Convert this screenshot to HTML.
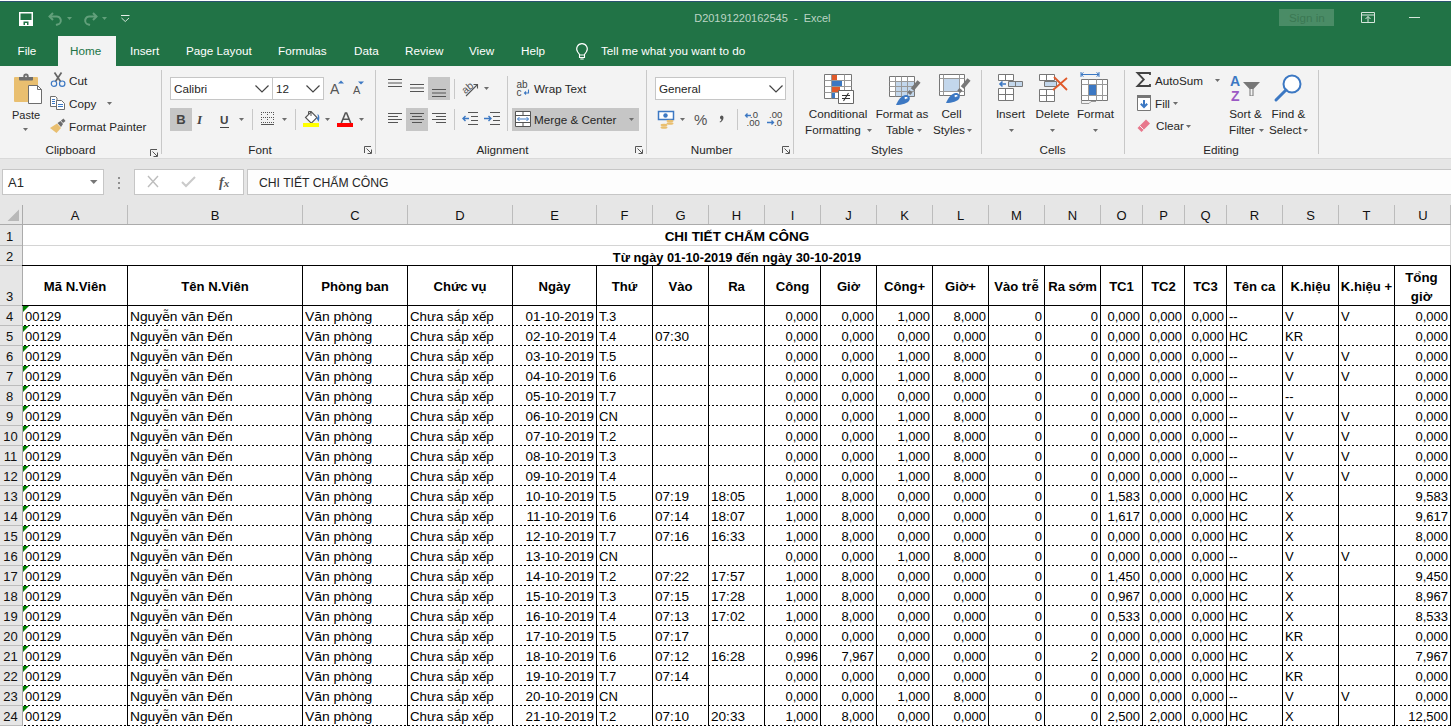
<!DOCTYPE html><html><head><meta charset="utf-8"><style>
*{margin:0;padding:0;box-sizing:border-box}
html,body{width:1451px;height:726px;overflow:hidden;background:#ffffff;font-family:"Liberation Sans", sans-serif;position:relative}
.a{position:absolute;white-space:nowrap}
svg.a{overflow:visible}
</style></head><body><div class="a" style="left:0px;top:0px;width:1451px;height:1px;background:#ffffff;"></div><div class="a" style="left:0px;top:1px;width:1451px;height:1px;background:#2a5270;"></div><div class="a" style="left:0px;top:2px;width:1451px;height:64px;background:#217346;"></div><svg class="a" style="left:19px;top:12px" width="14" height="14" viewBox="0 0 14 14"><path d="M0.75 0.75H13.25V13.25H0.75Z" fill="none" stroke="#fff" stroke-width="1.5"/><path d="M1 8H13V13H1Z" fill="#fff"/><path d="M4.5 9.5H9.5V13H4.5Z" fill="#217346"/><path d="M6 11H8V13H6Z" fill="#fff"/><path d="M3 1H11V7H3Z" fill="none"/></svg><svg class="a" style="left:48px;top:12px" width="15" height="14" viewBox="0 0 15 14"><path d="M5 1L1.5 4.5L5 8" fill="none" stroke="#62a07b" stroke-width="2"/><path d="M1.5 4.5H8A4 4 0 0 1 9.5 12.5L8 13" fill="none" stroke="#62a07b" stroke-width="2"/></svg><svg class="a" style="left:67px;top:17px" width="6" height="4" viewBox="0 0 6 4"><path d="M0 0H5L2.5 3Z" fill="#62a07b"/></svg><svg class="a" style="left:83px;top:12px" width="15" height="14" viewBox="0 0 15 14"><path d="M10 1L13.5 4.5L10 8" fill="none" stroke="#62a07b" stroke-width="2"/><path d="M13.5 4.5H7A4 4 0 0 0 5.5 12.5L7 13" fill="none" stroke="#62a07b" stroke-width="2"/></svg><svg class="a" style="left:102px;top:17px" width="6" height="4" viewBox="0 0 6 4"><path d="M0 0H5L2.5 3Z" fill="#62a07b"/></svg><svg class="a" style="left:121px;top:14px" width="9" height="9" viewBox="0 0 9 9"><path d="M0 1.5H8.5" stroke="#e3eee7" stroke-width="1"/><path d="M0.5 4L4.25 7.5L8 4" fill="none" stroke="#e3eee7" stroke-width="0.9"/></svg><div class="a" style="left:694.2px;top:10.7px;font-size:11px;line-height:15px;color:#bcd5c5;font-weight:normal;white-space:pre">D20191220162545  -  Excel</div><div class="a" style="left:1279px;top:9px;width:55px;height:17px;background:#4a8c66;"></div><div class="a" style="left:1289px;top:9.5px;font-size:11.7px;line-height:16px;color:#3b7853;font-weight:normal;">Sign in</div><svg class="a" style="left:1361px;top:12px" width="14" height="11" viewBox="0 0 14 11"><path d="M0.5 0.5H13.5V10.5H0.5Z M0.5 3H13.5 M7 10.5V4.5 M4.5 7L7 4.5L9.5 7" fill="none" stroke="#d6e6dc" stroke-width="1"/></svg><div class="a" style="left:1409px;top:17px;width:11px;height:1px;background:#d6e6dc;"></div><div class="a" style="left:58px;top:36px;width:58px;height:30px;background:#f3f3f3;"></div><div class="a" style="left:70px;top:43.0px;font-size:11.7px;line-height:16px;color:#217346;font-weight:normal;">Home</div><div class="a" style="left:17.5px;top:43.0px;font-size:11.7px;line-height:16px;color:#ffffff;font-weight:normal;">File</div><div class="a" style="left:130px;top:43.0px;font-size:11.7px;line-height:16px;color:#ffffff;font-weight:normal;">Insert</div><div class="a" style="left:186px;top:43.0px;font-size:11.7px;line-height:16px;color:#ffffff;font-weight:normal;">Page Layout</div><div class="a" style="left:278px;top:43.0px;font-size:11.7px;line-height:16px;color:#ffffff;font-weight:normal;">Formulas</div><div class="a" style="left:354px;top:43.0px;font-size:11.7px;line-height:16px;color:#ffffff;font-weight:normal;">Data</div><div class="a" style="left:405px;top:43.0px;font-size:11.7px;line-height:16px;color:#ffffff;font-weight:normal;">Review</div><div class="a" style="left:469px;top:43.0px;font-size:11.7px;line-height:16px;color:#ffffff;font-weight:normal;">View</div><div class="a" style="left:521px;top:43.0px;font-size:11.7px;line-height:16px;color:#ffffff;font-weight:normal;">Help</div><svg class="a" style="left:576px;top:43px" width="12" height="17" viewBox="0 0 12 17"><path d="M6 0.6A5.3 5.3 0 0 0 1.7 9L3.5 11.5V14.5H8.5V11.5L10.3 9A5.3 5.3 0 0 0 6 0.6Z" fill="none" stroke="#fff" stroke-width="1.1"/><path d="M3.5 12H8.5M4.3 16H7.7" stroke="#fff" stroke-width="1.1"/></svg><div class="a" style="left:601px;top:43.0px;font-size:11.7px;line-height:16px;color:#ffffff;font-weight:normal;">Tell me what you want to do</div><div class="a" style="left:0px;top:66px;width:1451px;height:92px;background:#f3f3f3;"></div><div class="a" style="left:0px;top:158px;width:1451px;height:1px;background:#d9d9d9;"></div><div class="a" style="left:0px;top:159px;width:1451px;height:46px;background:#e6e6e6;"></div><div class="a" style="left:161px;top:70px;width:1px;height:84px;background:#c8c8c8;"></div><div class="a" style="left:375px;top:70px;width:1px;height:84px;background:#c8c8c8;"></div><div class="a" style="left:646px;top:70px;width:1px;height:84px;background:#c8c8c8;"></div><div class="a" style="left:793px;top:70px;width:1px;height:84px;background:#c8c8c8;"></div><div class="a" style="left:981px;top:70px;width:1px;height:84px;background:#c8c8c8;"></div><div class="a" style="left:1124px;top:70px;width:1px;height:84px;background:#c8c8c8;"></div><div class="a" style="left:1318px;top:70px;width:1px;height:84px;background:#c8c8c8;"></div><div class="a" style="left:-129.5px;width:400px;text-align:center;top:142.0px;font-size:11.7px;line-height:16px;color:#262626;font-weight:normal;">Clipboard</div><div class="a" style="left:60px;width:400px;text-align:center;top:142.0px;font-size:11.7px;line-height:16px;color:#262626;font-weight:normal;">Font</div><div class="a" style="left:302.5px;width:400px;text-align:center;top:142.0px;font-size:11.7px;line-height:16px;color:#262626;font-weight:normal;">Alignment</div><div class="a" style="left:511.5px;width:400px;text-align:center;top:142.0px;font-size:11.7px;line-height:16px;color:#262626;font-weight:normal;">Number</div><div class="a" style="left:687px;width:400px;text-align:center;top:142.0px;font-size:11.7px;line-height:16px;color:#262626;font-weight:normal;">Styles</div><div class="a" style="left:852.5px;width:400px;text-align:center;top:142.0px;font-size:11.7px;line-height:16px;color:#262626;font-weight:normal;">Cells</div><div class="a" style="left:1021px;width:400px;text-align:center;top:142.0px;font-size:11.7px;line-height:16px;color:#262626;font-weight:normal;">Editing</div><svg class="a" style="left:150px;top:149px" width="9" height="9" viewBox="0 0 9 9"><path d="M0.5 7V0.5H7" fill="none" stroke="#555" stroke-width="1"/><path d="M2.5 2.5L7 7M7.5 3.5V7.5H3.5" fill="none" stroke="#555" stroke-width="1"/></svg><svg class="a" style="left:364px;top:146px" width="9" height="9" viewBox="0 0 9 9"><path d="M0.5 7V0.5H7" fill="none" stroke="#555" stroke-width="1"/><path d="M2.5 2.5L7 7M7.5 3.5V7.5H3.5" fill="none" stroke="#555" stroke-width="1"/></svg><svg class="a" style="left:635px;top:146px" width="9" height="9" viewBox="0 0 9 9"><path d="M0.5 7V0.5H7" fill="none" stroke="#555" stroke-width="1"/><path d="M2.5 2.5L7 7M7.5 3.5V7.5H3.5" fill="none" stroke="#555" stroke-width="1"/></svg><svg class="a" style="left:782px;top:146px" width="9" height="9" viewBox="0 0 9 9"><path d="M0.5 7V0.5H7" fill="none" stroke="#555" stroke-width="1"/><path d="M2.5 2.5L7 7M7.5 3.5V7.5H3.5" fill="none" stroke="#555" stroke-width="1"/></svg><svg class="a" style="left:13px;top:72px" width="31" height="34" viewBox="0 0 31 34"><path d="M3 5H24Q25 5 25 6V29Q25 30 24 30H2Q1 30 1 29V6Q1 5 2 5Z" fill="#e9bf70"/>
<path d="M6 5H20V7.5Q20 8.5 19 8.5H7Q6 8.5 6 7.5Z" fill="#6d6d6d"/><path d="M10.3 5V4.2A2.7 2.7 0 0 1 15.7 4.2V5Z" fill="#6d6d6d"/><circle cx="13" cy="4.3" r="0.9" fill="#f3f3f3"/>
<path d="M15.5 13.5H24.5L28.5 17.5V31.5H15.5Z" fill="#fff" stroke="#6d6d6d" stroke-width="1"/>
<path d="M24.5 13.5V17.5H28.5" fill="none" stroke="#6d6d6d" stroke-width="1"/></svg><div class="a" style="left:-174px;width:400px;text-align:center;top:108.0px;font-size:11px;line-height:15px;color:#262626;font-weight:normal;">Paste</div><svg class="a" style="left:23px;top:128px" width="6" height="4" viewBox="0 0 6 4"><path d="M0 0H5L2.5 3Z" fill="#6d6d6d"/></svg><svg class="a" style="left:50px;top:72px" width="16" height="16" viewBox="0 0 16 16"><path d="M4.5 0.5L10.5 9.5M11.5 0.5L5.5 9.5" stroke="#666" stroke-width="1.7" fill="none"/>
<circle cx="4" cy="11.7" r="2.7" fill="none" stroke="#3c78c3" stroke-width="1.2"/>
<circle cx="12.2" cy="11.7" r="2.7" fill="none" stroke="#3c78c3" stroke-width="1.2"/></svg><div class="a" style="left:69px;top:73.0px;font-size:11.7px;line-height:16px;color:#262626;font-weight:normal;">Cut</div><svg class="a" style="left:50px;top:96px" width="16" height="15" viewBox="0 0 16 15"><path d="M0.5 0.5H5.5L7 2V10.5H0.5Z" fill="#fff" stroke="#6d6d6d" stroke-width="1"/>
<path d="M6.5 4.5H11.5L14.5 7.5V13.5H6.5Z" fill="#fff" stroke="#6d6d6d" stroke-width="1"/>
<path d="M2 3.5H5M2 5.5H5M2 7.5H5M8 8.5H13M8 10.5H13" stroke="#3c78c3" stroke-width="1"/></svg><div class="a" style="left:69px;top:96.0px;font-size:11.7px;line-height:16px;color:#262626;font-weight:normal;">Copy</div><svg class="a" style="left:107px;top:102px" width="6" height="4" viewBox="0 0 6 4"><path d="M0 0H5L2.5 3Z" fill="#6d6d6d"/></svg><svg class="a" style="left:50px;top:118px" width="17" height="15" viewBox="0 0 17 15"><path d="M0 10L7 5.5L11 10L6.5 15Z" fill="#e9bf70"/>
<path d="M7.5 5L10.5 3L13 6L11 9Z" fill="#6d6d6d"/><path d="M11 2.5L13.5 0.5L15.5 3L13 5Z" fill="#6d6d6d"/></svg><div class="a" style="left:69px;top:119.0px;font-size:11.7px;line-height:16px;color:#262626;font-weight:normal;">Format Painter</div><div class="a" style="left:170px;top:77px;width:103px;height:23px;background:#ffffff;border:1px solid #c6c6c6"></div><div class="a" style="left:272px;top:77px;width:52px;height:23px;background:#ffffff;border:1px solid #c6c6c6"></div><div class="a" style="left:174px;top:80.5px;font-size:11.7px;line-height:16px;color:#262626;font-weight:normal;">Calibri</div><div class="a" style="left:276px;top:80.5px;font-size:11.7px;line-height:16px;color:#262626;font-weight:normal;">12</div><svg class="a" style="left:255px;top:85px" width="14" height="8" viewBox="0 0 14 8"><path d="M0.5 0.5L7 7L13.5 0.5" fill="none" stroke="#444" stroke-width="1.2"/></svg><svg class="a" style="left:306px;top:85px" width="14" height="8" viewBox="0 0 14 8"><path d="M0.5 0.5L7 7L13.5 0.5" fill="none" stroke="#444" stroke-width="1.2"/></svg><div class="a" style="left:330px;top:79.5px;font-size:14px;line-height:19px;color:#555;font-weight:normal;">A</div><svg class="a" style="left:338px;top:80px" width="6" height="4" viewBox="0 0 6 4"><path d="M0 3.5L3 0.5L6 3.5Z" fill="#3c78c3"/></svg><div class="a" style="left:353px;top:82.5px;font-size:11px;line-height:15px;color:#555;font-weight:normal;">A</div><svg class="a" style="left:358px;top:81px" width="6" height="4" viewBox="0 0 6 4"><path d="M0 0.5L3 3.5L6 0.5Z" fill="#3c78c3"/></svg><div class="a" style="left:170px;top:108px;width:22px;height:23px;background:#c6c6c6;"></div><div class="a" style="left:-19px;width:400px;text-align:center;top:110.5px;font-size:13px;line-height:18px;color:#444;font-weight:bold;">B</div><div class="a" style="left:197px;top:110.5px;font-size:13px;line-height:18px;color:#444;font-weight:normal;font-style:italic;font-family:'Liberation Serif',serif;font-weight:bold">I</div><div class="a" style="left:220px;top:111.5px;font-size:11.7px;line-height:16px;color:#444;font-weight:bold;">U</div><div class="a" style="left:220px;top:127px;width:9px;height:1px;background:#444;"></div><svg class="a" style="left:239px;top:118px" width="6" height="4" viewBox="0 0 6 4"><path d="M0 0H5L2.5 3Z" fill="#6d6d6d"/></svg><div class="a" style="left:252px;top:109px;width:1px;height:21px;background:#c8c8c8;"></div><svg class="a" style="left:261px;top:112px" width="14" height="14" viewBox="0 0 14 14"><rect x="0" y="0" width="1" height="1" fill="#555"/><rect x="2" y="0" width="1" height="1" fill="#555"/><rect x="4" y="0" width="1" height="1" fill="#555"/><rect x="6" y="0" width="1" height="1" fill="#555"/><rect x="8" y="0" width="1" height="1" fill="#555"/><rect x="10" y="0" width="1" height="1" fill="#555"/><rect x="12" y="0" width="1" height="1" fill="#555"/><rect x="0" y="5" width="1" height="1" fill="#555"/><rect x="2" y="5" width="1" height="1" fill="#555"/><rect x="4" y="5" width="1" height="1" fill="#555"/><rect x="6" y="5" width="1" height="1" fill="#555"/><rect x="8" y="5" width="1" height="1" fill="#555"/><rect x="10" y="5" width="1" height="1" fill="#555"/><rect x="12" y="5" width="1" height="1" fill="#555"/><rect x="0" y="10" width="1" height="1" fill="#555"/><rect x="2" y="10" width="1" height="1" fill="#555"/><rect x="4" y="10" width="1" height="1" fill="#555"/><rect x="6" y="10" width="1" height="1" fill="#555"/><rect x="8" y="10" width="1" height="1" fill="#555"/><rect x="10" y="10" width="1" height="1" fill="#555"/><rect x="12" y="10" width="1" height="1" fill="#555"/><rect x="0" y="2" width="1" height="1" fill="#555"/><rect x="0" y="7" width="1" height="1" fill="#555"/><rect x="6" y="2" width="1" height="1" fill="#555"/><rect x="6" y="7" width="1" height="1" fill="#555"/><rect x="12" y="2" width="1" height="1" fill="#555"/><rect x="12" y="7" width="1" height="1" fill="#555"/><rect x="0" y="12" width="13" height="1" fill="#555"/></svg><svg class="a" style="left:282px;top:118px" width="6" height="4" viewBox="0 0 6 4"><path d="M0 0H5L2.5 3Z" fill="#6d6d6d"/></svg><div class="a" style="left:295px;top:109px;width:1px;height:21px;background:#c8c8c8;"></div><svg class="a" style="left:303px;top:110px" width="17" height="18" viewBox="0 0 17 18"><path d="M2.5 7.5L8.3 1.8L14 7.5L8.3 13.2Z" fill="#fff" stroke="#555" stroke-width="1.1"/><path d="M5.5 4.5V1.5H8V6" fill="none" stroke="#555" stroke-width="1"/>
<path d="M14.5 4C16.5 5 17 8 15.5 12C14.8 10 13.8 9 13.5 8L15 7.5Z" fill="#3c78c3"/><path d="M0 13H16V17H0Z" fill="#ffff00"/></svg><svg class="a" style="left:325px;top:118px" width="6" height="4" viewBox="0 0 6 4"><path d="M0 0H5L2.5 3Z" fill="#6d6d6d"/></svg><svg class="a" style="left:340px;top:112px" width="12" height="12" viewBox="0 0 12 12"><path d="M1.3 11L5.4 1H6.6L10.7 11M3 7.3H9" fill="none" stroke="#555" stroke-width="1.6"/></svg><div class="a" style="left:337px;top:123px;width:16px;height:4px;background:#ff0000;"></div><svg class="a" style="left:359px;top:118px" width="6" height="4" viewBox="0 0 6 4"><path d="M0 0H5L2.5 3Z" fill="#6d6d6d"/></svg><svg class="a" style="left:388px;top:79px" width="16" height="12" viewBox="0 0 16 12"><path d="M0 0.5H14" stroke="#555" stroke-width="1"/><path d="M0 4.0H14" stroke="#555" stroke-width="1"/><path d="M0 7.5H14" stroke="#555" stroke-width="1"/></svg><svg class="a" style="left:410px;top:84px" width="16" height="12" viewBox="0 0 16 12"><path d="M0 0.5H14" stroke="#555" stroke-width="1"/><path d="M0 4.0H14" stroke="#555" stroke-width="1"/><path d="M0 7.5H14" stroke="#555" stroke-width="1"/></svg><div class="a" style="left:428px;top:77px;width:22px;height:23px;background:#c6c6c6;"></div><svg class="a" style="left:432px;top:89px" width="16" height="12" viewBox="0 0 16 12"><path d="M0 0.5H14" stroke="#555" stroke-width="1"/><path d="M0 4.0H14" stroke="#555" stroke-width="1"/><path d="M0 7.5H14" stroke="#555" stroke-width="1"/></svg><div class="a" style="left:454px;top:79px;width:1px;height:20px;background:#c8c8c8;"></div><svg class="a" style="left:461px;top:80px" width="18" height="17" viewBox="0 0 18 17"><text x="1" y="11" font-size="10.5" fill="#555" transform="rotate(-40 7 8)" font-family="Liberation Sans">ab</text>
<path d="M5 16L16 5M12.5 4.5H16.5V8.5" fill="none" stroke="#555" stroke-width="1.1"/></svg><svg class="a" style="left:484px;top:87px" width="6" height="4" viewBox="0 0 6 4"><path d="M0 0H5L2.5 3Z" fill="#6d6d6d"/></svg><div class="a" style="left:507px;top:76px;width:1px;height:55px;background:#c8c8c8;"></div><svg class="a" style="left:516px;top:80px" width="15" height="16" viewBox="0 0 15 16"><text x="0.5" y="8" font-size="10" fill="#444" font-family="Liberation Sans">ab</text><text x="0.5" y="15.5" font-size="10" fill="#444" font-family="Liberation Sans">c</text>
<path d="M12.5 9.5V13H8.5M10 11.5L8.5 13L10 14.5" fill="none" stroke="#3c78c3" stroke-width="1.1"/></svg><div class="a" style="left:534px;top:81.0px;font-size:11.7px;line-height:16px;color:#262626;font-weight:normal;">Wrap Text</div><svg class="a" style="left:388px;top:113px" width="16" height="14" viewBox="0 0 16 14"><path d="M0 0.5H14" stroke="#555" stroke-width="1"/><path d="M0 3.5H10" stroke="#555" stroke-width="1"/><path d="M0 6.5H14" stroke="#555" stroke-width="1"/><path d="M0 9.5H10" stroke="#555" stroke-width="1"/></svg><div class="a" style="left:406px;top:108px;width:22px;height:23px;background:#c6c6c6;"></div><svg class="a" style="left:410px;top:113px" width="16" height="14" viewBox="0 0 16 14"><path d="M0 0.5H14" stroke="#555" stroke-width="1"/><path d="M2 3.5H12" stroke="#555" stroke-width="1"/><path d="M0 6.5H14" stroke="#555" stroke-width="1"/><path d="M2 9.5H12" stroke="#555" stroke-width="1"/></svg><svg class="a" style="left:432px;top:113px" width="16" height="14" viewBox="0 0 16 14"><path d="M0 0.5H14" stroke="#555" stroke-width="1"/><path d="M4 3.5H14" stroke="#555" stroke-width="1"/><path d="M0 6.5H14" stroke="#555" stroke-width="1"/><path d="M4 9.5H14" stroke="#555" stroke-width="1"/></svg><div class="a" style="left:454px;top:109px;width:1px;height:21px;background:#c8c8c8;"></div><svg class="a" style="left:462px;top:112px" width="17" height="14" viewBox="0 0 17 14"><path d="M6 0.5H16M9 4.5H16M9 8.5H16M6 12.5H16" stroke="#555" stroke-width="1"/><path d="M7 6.5H1M3.5 4L1 6.5L3.5 9" fill="none" stroke="#3c78c3" stroke-width="1.4"/></svg><svg class="a" style="left:484px;top:112px" width="17" height="14" viewBox="0 0 17 14"><path d="M6 0.5H16M9 4.5H16M9 8.5H16M6 12.5H16" stroke="#555" stroke-width="1"/><path d="M0 6.5H7M4.5 4L7 6.5L4.5 9" fill="none" stroke="#3c78c3" stroke-width="1.4"/></svg><div class="a" style="left:512px;top:108px;width:127px;height:23px;background:#c6c6c6;"></div><svg class="a" style="left:515px;top:111px" width="16" height="16" viewBox="0 0 16 16"><path d="M0.5 0.5H15.5V15.5H0.5ZM0.5 4.5H15.5M0.5 11.5H15.5M8 0.5V4.5M8 11.5V15.5" fill="#fff" stroke="#555" stroke-width="1"/><path d="M2.5 8H13.5M4.5 6L2.5 8L4.5 10M11.5 6L13.5 8L11.5 10" fill="none" stroke="#3c78c3" stroke-width="1"/></svg><div class="a" style="left:534px;top:111.5px;font-size:11.7px;line-height:16px;color:#262626;font-weight:normal;">Merge &amp; Center</div><svg class="a" style="left:629px;top:118px" width="6" height="4" viewBox="0 0 6 4"><path d="M0 0H5L2.5 3Z" fill="#6d6d6d"/></svg><div class="a" style="left:655px;top:77px;width:131px;height:23px;background:#ffffff;border:1px solid #c6c6c6"></div><div class="a" style="left:659px;top:80.5px;font-size:11.7px;line-height:16px;color:#262626;font-weight:normal;">General</div><svg class="a" style="left:769px;top:85px" width="14" height="8" viewBox="0 0 14 8"><path d="M0.5 0.5L7 7L13.5 0.5" fill="none" stroke="#444" stroke-width="1.2"/></svg><svg class="a" style="left:658px;top:111px" width="17" height="18" viewBox="0 0 17 18"><path d="M0.5 0.5H15.5V8.5H0.5Z" fill="#fff" stroke="#3c78c3" stroke-width="1.5"/><circle cx="7.5" cy="4.5" r="2.2" fill="#3c78c3"/>
<ellipse cx="12" cy="10" rx="3.5" ry="1.3" fill="#e9bf70"/><ellipse cx="12" cy="12.5" rx="3.5" ry="1.3" fill="#e9bf70"/><ellipse cx="6" cy="14" rx="3.5" ry="1.3" fill="#e9bf70"/><ellipse cx="6" cy="16.5" rx="3.5" ry="1.3" fill="#e9bf70"/></svg><svg class="a" style="left:680px;top:118px" width="6" height="4" viewBox="0 0 6 4"><path d="M0 0H5L2.5 3Z" fill="#6d6d6d"/></svg><div class="a" style="left:694px;top:109.0px;font-size:15px;line-height:21px;color:#555;font-weight:normal;">%</div><svg class="a" style="left:719px;top:115px" width="6" height="8" viewBox="0 0 6 8"><path d="M2.5 0.5A2 2 0 0 1 4.5 2.5C4.5 5 3 6.5 1 7.5L0.6 6.8C1.8 6 2.4 5.2 2.5 4.4A2 2 0 0 1 2.5 0.5Z" fill="#555"/></svg><div class="a" style="left:737px;top:109px;width:1px;height:21px;background:#c8c8c8;"></div><svg class="a" style="left:744px;top:111px" width="16" height="15" viewBox="0 0 16 15"><text x="6" y="7" font-size="9.5" fill="#444" font-family="Liberation Sans">.0</text><text x="2.5" y="14.5" font-size="9.5" fill="#444" font-family="Liberation Sans">.00</text>
<path d="M7 4.5H1.5M3.5 2.5L1.5 4.5L3.5 6.5" fill="none" stroke="#3c78c3" stroke-width="1.3"/></svg><svg class="a" style="left:766px;top:111px" width="17" height="15" viewBox="0 0 17 15"><text x="3" y="7" font-size="9.5" fill="#444" font-family="Liberation Sans">.00</text><text x="8" y="14.5" font-size="9.5" fill="#444" font-family="Liberation Sans">.0</text>
<path d="M1 11.5H7.5M5.5 9.5L7.5 11.5L5.5 13.5" fill="none" stroke="#3c78c3" stroke-width="1.3"/></svg><svg class="a" style="left:824px;top:74px" width="31" height="31" viewBox="0 0 31 31"><path d="M0.5 0.5H27.5V24.5H0.5Z" fill="#fff" stroke="#777" stroke-width="1"/>
<path d="M7.5 0.5V24.5M20.5 0.5V24.5M0.5 6.5H27.5M0.5 12.5H27.5M0.5 18.5H27.5" stroke="#999" stroke-width="1"/>
<path d="M8 1H13V6H8Z M8 13H16V18H8Z" fill="#e05a2b"/><path d="M8 7H18V12H8Z M8 19H11V24H8Z" fill="#3c78c3"/>
<path d="M14.5 16.5H29.5V29.5H14.5Z" fill="#fff" stroke="#666" stroke-width="1"/><path d="M18 21.5H26M18 24.5H26M24.5 19L19.5 27" stroke="#333" stroke-width="1.1"/></svg><div class="a" style="left:638px;width:400px;text-align:center;top:106.0px;font-size:11.7px;line-height:16px;color:#262626;font-weight:normal;">Conditional</div><div class="a" style="left:805px;top:122.0px;font-size:11.7px;line-height:16px;color:#262626;font-weight:normal;">Formatting</div><svg class="a" style="left:867px;top:129px" width="6" height="4" viewBox="0 0 6 4"><path d="M0 0H5L2.5 3Z" fill="#6d6d6d"/></svg><svg class="a" style="left:889px;top:76px" width="31" height="29" viewBox="0 0 31 29"><path d="M0.5 0.5H25.5V20.5H0.5Z" fill="#fff" stroke="#777" stroke-width="1"/>
<path d="M7 5H25V20H7Z" fill="#c3d7ec"/>
<path d="M6.5 0.5V20.5M12.5 0.5V20.5M18.5 0.5V20.5M0.5 5.5H25.5M0.5 10.5H25.5M0.5 15.5H25.5" stroke="#999" stroke-width="1"/>
<path d="M30 5.5L23.3 13.6" stroke="#777" stroke-width="4"/><path d="M22 15.2L19.8 17.8" stroke="#777" stroke-width="4"/><path d="M7 29C9 24 12.5 19.5 17 19C20 19 21.5 21.5 20.5 24C19 27.5 13 29 7 29Z" fill="#3c78c3"/><path d="M15.5 21.5C17 20.8 18.5 21 18.8 22.3C17.5 22.5 16.5 23 16 23.5Z" fill="#fff"/></svg><div class="a" style="left:702px;width:400px;text-align:center;top:106.0px;font-size:11.7px;line-height:16px;color:#262626;font-weight:normal;">Format as</div><div class="a" style="left:886px;top:122.0px;font-size:11.7px;line-height:16px;color:#262626;font-weight:normal;">Table</div><svg class="a" style="left:917px;top:129px" width="6" height="4" viewBox="0 0 6 4"><path d="M0 0H5L2.5 3Z" fill="#6d6d6d"/></svg><svg class="a" style="left:939px;top:74px" width="31" height="29" viewBox="0 0 31 29"><path d="M0.5 0.5H25.5V21.5H0.5Z" fill="#fff" stroke="#777" stroke-width="1"/>
<path d="M5 5H20V17H5Z" fill="#c3d7ec"/>
<path d="M4.5 0.5V21.5M20.5 0.5V21.5M0.5 4.5H25.5M0.5 17.5H25.5" stroke="#999" stroke-width="1"/>
<path d="M30 5.5L23.3 13.6" stroke="#777" stroke-width="4"/><path d="M22 15.2L19.8 17.8" stroke="#777" stroke-width="4"/><path d="M7 29C9 24 12.5 19.5 17 19C20 19 21.5 21.5 20.5 24C19 27.5 13 29 7 29Z" fill="#3c78c3"/><path d="M15.5 21.5C17 20.8 18.5 21 18.8 22.3C17.5 22.5 16.5 23 16 23.5Z" fill="#fff"/></svg><div class="a" style="left:751.5px;width:400px;text-align:center;top:106.0px;font-size:11.7px;line-height:16px;color:#262626;font-weight:normal;">Cell</div><div class="a" style="left:933px;top:122.0px;font-size:11.7px;line-height:16px;color:#262626;font-weight:normal;">Styles</div><svg class="a" style="left:967px;top:129px" width="6" height="4" viewBox="0 0 6 4"><path d="M0 0H5L2.5 3Z" fill="#6d6d6d"/></svg><svg class="a" style="left:997px;top:73px" width="28" height="30" viewBox="0 0 28 30"><path d="M1.5 1.5H16.5V7.5H1.5ZM8.5 1.5V7.5" fill="#fff" stroke="#777" stroke-width="1"/>
<path d="M11.5 8.5H25.5V13.5H11.5Z" fill="#c3d7ec" stroke="#777" stroke-width="1"/><path d="M18.5 8.5V13.5" stroke="#777"/>
<path d="M9 11H3M5.5 8.5L3 11L5.5 13.5" fill="none" stroke="#3c78c3" stroke-width="1.6"/>
<path d="M1.5 15.5H16.5V27.5H1.5ZM8.5 15.5V27.5M1.5 21.5H16.5" fill="#fff" stroke="#777" stroke-width="1"/></svg><div class="a" style="left:810.5px;width:400px;text-align:center;top:106.0px;font-size:11.7px;line-height:16px;color:#262626;font-weight:normal;">Insert</div><svg class="a" style="left:1009px;top:129px" width="6" height="4" viewBox="0 0 6 4"><path d="M0 0H5L2.5 3Z" fill="#6d6d6d"/></svg><svg class="a" style="left:1038px;top:73px" width="30" height="30" viewBox="0 0 30 30"><path d="M1.5 1.5H16.5V7.5H1.5ZM8.5 1.5V7.5" fill="#fff" stroke="#777" stroke-width="1"/>
<path d="M6.5 8.5H18.5V13.5H6.5Z" fill="#c3d7ec" stroke="#777" stroke-width="1"/>
<path d="M1.5 16.5H16.5V28.5H1.5ZM8.5 16.5V28.5M1.5 22.5H16.5" fill="#fff" stroke="#777" stroke-width="1"/>
<path d="M16 4L29 17M29 5L15 17" stroke="#e05a2b" stroke-width="1.8"/></svg><div class="a" style="left:852.5px;width:400px;text-align:center;top:106.0px;font-size:11.7px;line-height:16px;color:#262626;font-weight:normal;">Delete</div><svg class="a" style="left:1050px;top:129px" width="6" height="4" viewBox="0 0 6 4"><path d="M0 0H5L2.5 3Z" fill="#6d6d6d"/></svg><svg class="a" style="left:1080px;top:71px" width="30" height="34" viewBox="0 0 30 34"><path d="M1 3.5H19M1 1V6M19 1V6M3.5 1.5L1 3.5L3.5 5.5M16.5 1.5L19 3.5L16.5 5.5" fill="none" stroke="#3c78c3" stroke-width="1"/>
<path d="M1.5 8.5H27.5V29.5H1.5Z" fill="#fff" stroke="#777" stroke-width="1"/>
<path d="M8.5 8.5V29.5M16.5 8.5V29.5M22.5 8.5V29.5M1.5 13.5H27.5M1.5 24.5H27.5" stroke="#999" stroke-width="1"/>
<path d="M9 14H16V24H9Z" fill="#3c78c3"/>
<path d="M1.5 29.5V32.5H9L11 30.5H16" fill="none" stroke="#999" stroke-width="1"/></svg><div class="a" style="left:895.5px;width:400px;text-align:center;top:106.0px;font-size:11.7px;line-height:16px;color:#262626;font-weight:normal;">Format</div><svg class="a" style="left:1093px;top:129px" width="6" height="4" viewBox="0 0 6 4"><path d="M0 0H5L2.5 3Z" fill="#6d6d6d"/></svg><svg class="a" style="left:1136px;top:72px" width="16" height="16" viewBox="0 0 16 16"><path d="M14 3V1H1.5L7.8 7.5L1.5 14H14V12" fill="none" stroke="#444" stroke-width="1.8"/></svg><div class="a" style="left:1155px;top:73.0px;font-size:11.7px;line-height:16px;color:#262626;font-weight:normal;">AutoSum</div><svg class="a" style="left:1215px;top:79px" width="6" height="4" viewBox="0 0 6 4"><path d="M0 0H5L2.5 3Z" fill="#6d6d6d"/></svg><svg class="a" style="left:1136px;top:94px" width="16" height="18" viewBox="0 0 16 18"><path d="M1.5 1.5H14.5V16.5H1.5Z" fill="#fff" stroke="#777" stroke-width="1"/><path d="M1 1H15V4H1Z" fill="#777"/><path d="M8 6V13M4.8 9.8L8 13L11.2 9.8" fill="none" stroke="#3c78c3" stroke-width="2"/></svg><div class="a" style="left:1155px;top:95.5px;font-size:11.7px;line-height:16px;color:#262626;font-weight:normal;">Fill</div><svg class="a" style="left:1173px;top:102px" width="6" height="4" viewBox="0 0 6 4"><path d="M0 0H5L2.5 3Z" fill="#6d6d6d"/></svg><svg class="a" style="left:1137px;top:119px" width="14" height="14" viewBox="0 0 14 14"><path d="M0.5 9L9 0.5L13 4.5L4.5 13Z" fill="#e8788d"/><path d="M2.8 6.8L6.7 10.7" stroke="#f3f3f3" stroke-width="1"/></svg><div class="a" style="left:1156px;top:118.0px;font-size:11.7px;line-height:16px;color:#262626;font-weight:normal;">Clear</div><svg class="a" style="left:1186px;top:125px" width="6" height="4" viewBox="0 0 6 4"><path d="M0 0H5L2.5 3Z" fill="#6d6d6d"/></svg><svg class="a" style="left:1230px;top:74px" width="32" height="28" viewBox="0 0 32 28"><text x="0" y="12" font-size="14" fill="#3c78c3" font-family="Liberation Sans" font-weight="bold">A</text>
<text x="1" y="27" font-size="14" fill="#9b59c4" font-family="Liberation Sans" font-weight="bold">Z</text>
<path d="M13 8H30L23.5 15V22H19.5V15Z" fill="#777"/><path d="M20.5 15V21.5H22.5V15" fill="#f3f3f3"/></svg><div class="a" style="left:1045.5px;width:400px;text-align:center;top:106.0px;font-size:11.7px;line-height:16px;color:#262626;font-weight:normal;">Sort &amp;</div><div class="a" style="left:1229px;top:122.0px;font-size:11.7px;line-height:16px;color:#262626;font-weight:normal;">Filter</div><svg class="a" style="left:1259px;top:129px" width="6" height="4" viewBox="0 0 6 4"><path d="M0 0H5L2.5 3Z" fill="#6d6d6d"/></svg><svg class="a" style="left:1274px;top:73px" width="30" height="30" viewBox="0 0 30 30"><circle cx="18" cy="11" r="8.5" fill="#fff" stroke="#3c78c3" stroke-width="2"/><path d="M2 27L12 17" stroke="#3c78c3" stroke-width="3" stroke-linecap="round"/></svg><div class="a" style="left:1088.5px;width:400px;text-align:center;top:106.0px;font-size:11.7px;line-height:16px;color:#262626;font-weight:normal;">Find &amp;</div><div class="a" style="left:1269px;top:122.0px;font-size:11.7px;line-height:16px;color:#262626;font-weight:normal;">Select</div><svg class="a" style="left:1303px;top:129px" width="6" height="4" viewBox="0 0 6 4"><path d="M0 0H5L2.5 3Z" fill="#6d6d6d"/></svg><div class="a" style="left:2px;top:169px;width:102px;height:26px;background:#ffffff;border:1px solid #c6c6c6"></div><div class="a" style="left:8px;top:174.0px;font-size:13px;line-height:18px;color:#262626;font-weight:normal;">A1</div><svg class="a" style="left:90px;top:180px" width="8" height="5" viewBox="0 0 8 5"><path d="M0 0H7.5L3.75 4Z" fill="#777"/></svg><div class="a" style="left:118px;top:177px;width:2px;height:2px;background:#8f8f8f;"></div><div class="a" style="left:118px;top:182px;width:2px;height:2px;background:#8f8f8f;"></div><div class="a" style="left:118px;top:187px;width:2px;height:2px;background:#8f8f8f;"></div><div class="a" style="left:134px;top:169px;width:110px;height:26px;background:#ffffff;border:1px solid #c6c6c6"></div><svg class="a" style="left:147px;top:175px" width="12" height="13" viewBox="0 0 12 13"><path d="M1 1L11 12M11 1L1 12" stroke="#bdbdbd" stroke-width="1.4"/></svg><svg class="a" style="left:181px;top:175px" width="15" height="13" viewBox="0 0 15 13"><path d="M1 7L5 11L14 2" fill="none" stroke="#cacaca" stroke-width="2"/></svg><div class="a" style="left:219px;top:173px;font-size:14px;line-height:20px;color:#555;font-family:&quot;Liberation Serif&quot;,serif;font-style:italic;font-weight:bold">f<span style="font-size:11px">x</span></div><div class="a" style="left:247px;top:169px;width:1204px;height:26px;background:#fdfdfd;border:1px solid #c6c6c6;border-right:none"></div><div class="a" style="left:259px;top:175.0px;font-size:12.2px;line-height:17px;color:#262626;font-weight:normal;">CHI TIẾT CHẤM CÔNG</div><div class="a" style="left:0px;top:205px;width:1451px;height:19px;background:#e6e6e6;"></div><div class="a" style="left:0px;top:224px;width:1451px;height:1px;background:#ababab;"></div><div class="a" style="left:22px;top:205px;width:1px;height:19px;background:#ababab;"></div><div class="a" style="left:-125.0px;width:400px;text-align:center;top:206.8px;font-size:13px;line-height:18px;color:#111;font-weight:normal;">A</div><div class="a" style="left:127px;top:205px;width:1px;height:19px;background:#bcbcbc;"></div><div class="a" style="left:15.0px;width:400px;text-align:center;top:206.8px;font-size:13px;line-height:18px;color:#111;font-weight:normal;">B</div><div class="a" style="left:302px;top:205px;width:1px;height:19px;background:#bcbcbc;"></div><div class="a" style="left:155.0px;width:400px;text-align:center;top:206.8px;font-size:13px;line-height:18px;color:#111;font-weight:normal;">C</div><div class="a" style="left:407px;top:205px;width:1px;height:19px;background:#bcbcbc;"></div><div class="a" style="left:260.0px;width:400px;text-align:center;top:206.8px;font-size:13px;line-height:18px;color:#111;font-weight:normal;">D</div><div class="a" style="left:512px;top:205px;width:1px;height:19px;background:#bcbcbc;"></div><div class="a" style="left:354.5px;width:400px;text-align:center;top:206.8px;font-size:13px;line-height:18px;color:#111;font-weight:normal;">E</div><div class="a" style="left:596px;top:205px;width:1px;height:19px;background:#bcbcbc;"></div><div class="a" style="left:424.5px;width:400px;text-align:center;top:206.8px;font-size:13px;line-height:18px;color:#111;font-weight:normal;">F</div><div class="a" style="left:652px;top:205px;width:1px;height:19px;background:#bcbcbc;"></div><div class="a" style="left:480.5px;width:400px;text-align:center;top:206.8px;font-size:13px;line-height:18px;color:#111;font-weight:normal;">G</div><div class="a" style="left:708px;top:205px;width:1px;height:19px;background:#bcbcbc;"></div><div class="a" style="left:536.5px;width:400px;text-align:center;top:206.8px;font-size:13px;line-height:18px;color:#111;font-weight:normal;">H</div><div class="a" style="left:764px;top:205px;width:1px;height:19px;background:#bcbcbc;"></div><div class="a" style="left:592.5px;width:400px;text-align:center;top:206.8px;font-size:13px;line-height:18px;color:#111;font-weight:normal;">I</div><div class="a" style="left:820px;top:205px;width:1px;height:19px;background:#bcbcbc;"></div><div class="a" style="left:648.5px;width:400px;text-align:center;top:206.8px;font-size:13px;line-height:18px;color:#111;font-weight:normal;">J</div><div class="a" style="left:876px;top:205px;width:1px;height:19px;background:#bcbcbc;"></div><div class="a" style="left:704.5px;width:400px;text-align:center;top:206.8px;font-size:13px;line-height:18px;color:#111;font-weight:normal;">K</div><div class="a" style="left:932px;top:205px;width:1px;height:19px;background:#bcbcbc;"></div><div class="a" style="left:760.5px;width:400px;text-align:center;top:206.8px;font-size:13px;line-height:18px;color:#111;font-weight:normal;">L</div><div class="a" style="left:988px;top:205px;width:1px;height:19px;background:#bcbcbc;"></div><div class="a" style="left:816.5px;width:400px;text-align:center;top:206.8px;font-size:13px;line-height:18px;color:#111;font-weight:normal;">M</div><div class="a" style="left:1044px;top:205px;width:1px;height:19px;background:#bcbcbc;"></div><div class="a" style="left:872.5px;width:400px;text-align:center;top:206.8px;font-size:13px;line-height:18px;color:#111;font-weight:normal;">N</div><div class="a" style="left:1100px;top:205px;width:1px;height:19px;background:#bcbcbc;"></div><div class="a" style="left:921.5px;width:400px;text-align:center;top:206.8px;font-size:13px;line-height:18px;color:#111;font-weight:normal;">O</div><div class="a" style="left:1142px;top:205px;width:1px;height:19px;background:#bcbcbc;"></div><div class="a" style="left:963.5px;width:400px;text-align:center;top:206.8px;font-size:13px;line-height:18px;color:#111;font-weight:normal;">P</div><div class="a" style="left:1184px;top:205px;width:1px;height:19px;background:#bcbcbc;"></div><div class="a" style="left:1005.5px;width:400px;text-align:center;top:206.8px;font-size:13px;line-height:18px;color:#111;font-weight:normal;">Q</div><div class="a" style="left:1226px;top:205px;width:1px;height:19px;background:#bcbcbc;"></div><div class="a" style="left:1054.5px;width:400px;text-align:center;top:206.8px;font-size:13px;line-height:18px;color:#111;font-weight:normal;">R</div><div class="a" style="left:1282px;top:205px;width:1px;height:19px;background:#bcbcbc;"></div><div class="a" style="left:1110.5px;width:400px;text-align:center;top:206.8px;font-size:13px;line-height:18px;color:#111;font-weight:normal;">S</div><div class="a" style="left:1338px;top:205px;width:1px;height:19px;background:#bcbcbc;"></div><div class="a" style="left:1166.5px;width:400px;text-align:center;top:206.8px;font-size:13px;line-height:18px;color:#111;font-weight:normal;">T</div><div class="a" style="left:1394px;top:205px;width:1px;height:19px;background:#bcbcbc;"></div><div class="a" style="left:1223.0px;width:400px;text-align:center;top:206.8px;font-size:13px;line-height:18px;color:#111;font-weight:normal;">U</div><svg class="a" style="left:7px;top:209px" width="12" height="12" viewBox="0 0 12 12"><path d="M12 0.5V12H0.5Z" fill="#b8b8b8"/></svg><div class="a" style="left:0px;top:225px;width:22px;height:501px;background:#e6e6e6;"></div><div class="a" style="left:22px;top:205px;width:1px;height:521px;background:#ababab;"></div><div class="a" style="left:0px;top:245px;width:22px;height:1px;background:#bcbcbc;"></div><div class="a" style="left:-190.5px;width:400px;text-align:center;top:227.5px;font-size:13px;line-height:18px;color:#111;font-weight:normal;">1</div><div class="a" style="left:0px;top:265px;width:22px;height:1px;background:#bcbcbc;"></div><div class="a" style="left:-190.5px;width:400px;text-align:center;top:248.0px;font-size:13px;line-height:18px;color:#111;font-weight:normal;">2</div><div class="a" style="left:0px;top:305px;width:22px;height:1px;background:#bcbcbc;"></div><div class="a" style="left:-190.5px;width:400px;text-align:center;top:288.0px;font-size:13px;line-height:18px;color:#111;font-weight:normal;">3</div><div class="a" style="left:0px;top:325px;width:22px;height:1px;background:#bcbcbc;"></div><div class="a" style="left:-190.5px;width:400px;text-align:center;top:308.0px;font-size:13px;line-height:18px;color:#111;font-weight:normal;">4</div><div class="a" style="left:0px;top:345px;width:22px;height:1px;background:#bcbcbc;"></div><div class="a" style="left:-190.5px;width:400px;text-align:center;top:328.0px;font-size:13px;line-height:18px;color:#111;font-weight:normal;">5</div><div class="a" style="left:0px;top:365px;width:22px;height:1px;background:#bcbcbc;"></div><div class="a" style="left:-190.5px;width:400px;text-align:center;top:348.0px;font-size:13px;line-height:18px;color:#111;font-weight:normal;">6</div><div class="a" style="left:0px;top:385px;width:22px;height:1px;background:#bcbcbc;"></div><div class="a" style="left:-190.5px;width:400px;text-align:center;top:368.0px;font-size:13px;line-height:18px;color:#111;font-weight:normal;">7</div><div class="a" style="left:0px;top:405px;width:22px;height:1px;background:#bcbcbc;"></div><div class="a" style="left:-190.5px;width:400px;text-align:center;top:388.0px;font-size:13px;line-height:18px;color:#111;font-weight:normal;">8</div><div class="a" style="left:0px;top:425px;width:22px;height:1px;background:#bcbcbc;"></div><div class="a" style="left:-190.5px;width:400px;text-align:center;top:408.0px;font-size:13px;line-height:18px;color:#111;font-weight:normal;">9</div><div class="a" style="left:0px;top:445px;width:22px;height:1px;background:#bcbcbc;"></div><div class="a" style="left:-189.5px;width:400px;text-align:center;top:428.0px;font-size:13px;line-height:18px;color:#111;font-weight:normal;">10</div><div class="a" style="left:0px;top:465px;width:22px;height:1px;background:#bcbcbc;"></div><div class="a" style="left:-189.5px;width:400px;text-align:center;top:448.0px;font-size:13px;line-height:18px;color:#111;font-weight:normal;">11</div><div class="a" style="left:0px;top:485px;width:22px;height:1px;background:#bcbcbc;"></div><div class="a" style="left:-189.5px;width:400px;text-align:center;top:468.0px;font-size:13px;line-height:18px;color:#111;font-weight:normal;">12</div><div class="a" style="left:0px;top:505px;width:22px;height:1px;background:#bcbcbc;"></div><div class="a" style="left:-189.5px;width:400px;text-align:center;top:488.0px;font-size:13px;line-height:18px;color:#111;font-weight:normal;">13</div><div class="a" style="left:0px;top:525px;width:22px;height:1px;background:#bcbcbc;"></div><div class="a" style="left:-189.5px;width:400px;text-align:center;top:508.0px;font-size:13px;line-height:18px;color:#111;font-weight:normal;">14</div><div class="a" style="left:0px;top:545px;width:22px;height:1px;background:#bcbcbc;"></div><div class="a" style="left:-189.5px;width:400px;text-align:center;top:528.0px;font-size:13px;line-height:18px;color:#111;font-weight:normal;">15</div><div class="a" style="left:0px;top:565px;width:22px;height:1px;background:#bcbcbc;"></div><div class="a" style="left:-189.5px;width:400px;text-align:center;top:548.0px;font-size:13px;line-height:18px;color:#111;font-weight:normal;">16</div><div class="a" style="left:0px;top:585px;width:22px;height:1px;background:#bcbcbc;"></div><div class="a" style="left:-189.5px;width:400px;text-align:center;top:568.0px;font-size:13px;line-height:18px;color:#111;font-weight:normal;">17</div><div class="a" style="left:0px;top:605px;width:22px;height:1px;background:#bcbcbc;"></div><div class="a" style="left:-189.5px;width:400px;text-align:center;top:588.0px;font-size:13px;line-height:18px;color:#111;font-weight:normal;">18</div><div class="a" style="left:0px;top:625px;width:22px;height:1px;background:#bcbcbc;"></div><div class="a" style="left:-189.5px;width:400px;text-align:center;top:608.0px;font-size:13px;line-height:18px;color:#111;font-weight:normal;">19</div><div class="a" style="left:0px;top:645px;width:22px;height:1px;background:#bcbcbc;"></div><div class="a" style="left:-189.5px;width:400px;text-align:center;top:628.0px;font-size:13px;line-height:18px;color:#111;font-weight:normal;">20</div><div class="a" style="left:0px;top:665px;width:22px;height:1px;background:#bcbcbc;"></div><div class="a" style="left:-189.5px;width:400px;text-align:center;top:648.0px;font-size:13px;line-height:18px;color:#111;font-weight:normal;">21</div><div class="a" style="left:0px;top:685px;width:22px;height:1px;background:#bcbcbc;"></div><div class="a" style="left:-189.5px;width:400px;text-align:center;top:668.0px;font-size:13px;line-height:18px;color:#111;font-weight:normal;">22</div><div class="a" style="left:0px;top:705px;width:22px;height:1px;background:#bcbcbc;"></div><div class="a" style="left:-189.5px;width:400px;text-align:center;top:688.0px;font-size:13px;line-height:18px;color:#111;font-weight:normal;">23</div><div class="a" style="left:0px;top:725px;width:22px;height:1px;background:#bcbcbc;"></div><div class="a" style="left:-189.5px;width:400px;text-align:center;top:708.0px;font-size:13px;line-height:18px;color:#111;font-weight:normal;">24</div><div class="a" style="left:23px;top:245px;width:1428px;height:1px;background:#d4d4d4;"></div><div class="a" style="left:537.0px;width:400px;text-align:center;top:227.5px;font-size:13.5px;line-height:18px;color:#000;font-weight:bold;">CHI TIẾT CHẤM CÔNG</div><div class="a" style="left:537.0px;width:400px;text-align:center;top:248.5px;font-size:12.8px;line-height:17px;color:#000;font-weight:bold;">Từ ngày 01-10-2019 đến ngày 30-10-2019</div><div class="a" style="left:22px;top:265px;width:1429px;height:1px;background:#000;"></div><div class="a" style="left:22px;top:305px;width:1429px;height:1px;background:#000;"></div><div class="a" style="left:127px;top:265px;width:1px;height:461px;background:#000;"></div><div class="a" style="left:302px;top:265px;width:1px;height:461px;background:#000;"></div><div class="a" style="left:407px;top:265px;width:1px;height:461px;background:#000;"></div><div class="a" style="left:512px;top:265px;width:1px;height:461px;background:#000;"></div><div class="a" style="left:596px;top:265px;width:1px;height:461px;background:#000;"></div><div class="a" style="left:652px;top:265px;width:1px;height:461px;background:#000;"></div><div class="a" style="left:708px;top:265px;width:1px;height:461px;background:#000;"></div><div class="a" style="left:764px;top:265px;width:1px;height:461px;background:#000;"></div><div class="a" style="left:820px;top:265px;width:1px;height:461px;background:#000;"></div><div class="a" style="left:876px;top:265px;width:1px;height:461px;background:#000;"></div><div class="a" style="left:932px;top:265px;width:1px;height:461px;background:#000;"></div><div class="a" style="left:988px;top:265px;width:1px;height:461px;background:#000;"></div><div class="a" style="left:1044px;top:265px;width:1px;height:461px;background:#000;"></div><div class="a" style="left:1100px;top:265px;width:1px;height:461px;background:#000;"></div><div class="a" style="left:1142px;top:265px;width:1px;height:461px;background:#000;"></div><div class="a" style="left:1184px;top:265px;width:1px;height:461px;background:#000;"></div><div class="a" style="left:1226px;top:265px;width:1px;height:461px;background:#000;"></div><div class="a" style="left:1282px;top:265px;width:1px;height:461px;background:#000;"></div><div class="a" style="left:1338px;top:265px;width:1px;height:461px;background:#000;"></div><div class="a" style="left:1394px;top:265px;width:1px;height:461px;background:#000;"></div><div class="a" style="left:1450px;top:265px;width:1px;height:461px;background:#000;"></div><div class="a" style="left:1450px;top:205px;width:1px;height:19px;background:#bcbcbc;"></div><div class="a" style="left:1450px;top:225px;width:1px;height:40px;background:#d4d4d4;"></div><div class="a" style="left:-125.0px;width:400px;text-align:center;top:278.0px;font-size:13.1px;line-height:18px;color:#000;font-weight:bold;">Mã N.Viên</div><div class="a" style="left:15.0px;width:400px;text-align:center;top:278.0px;font-size:13.1px;line-height:18px;color:#000;font-weight:bold;">Tên N.Viên</div><div class="a" style="left:155.0px;width:400px;text-align:center;top:278.0px;font-size:13.1px;line-height:18px;color:#000;font-weight:bold;">Phòng ban</div><div class="a" style="left:260.0px;width:400px;text-align:center;top:278.0px;font-size:13.1px;line-height:18px;color:#000;font-weight:bold;">Chức vụ</div><div class="a" style="left:354.5px;width:400px;text-align:center;top:278.0px;font-size:13.1px;line-height:18px;color:#000;font-weight:bold;">Ngày</div><div class="a" style="left:424.5px;width:400px;text-align:center;top:278.0px;font-size:13.1px;line-height:18px;color:#000;font-weight:bold;">Thứ</div><div class="a" style="left:480.5px;width:400px;text-align:center;top:278.0px;font-size:13.1px;line-height:18px;color:#000;font-weight:bold;">Vào</div><div class="a" style="left:536.5px;width:400px;text-align:center;top:278.0px;font-size:13.1px;line-height:18px;color:#000;font-weight:bold;">Ra</div><div class="a" style="left:592.5px;width:400px;text-align:center;top:278.0px;font-size:13.1px;line-height:18px;color:#000;font-weight:bold;">Công</div><div class="a" style="left:648.5px;width:400px;text-align:center;top:278.0px;font-size:13.1px;line-height:18px;color:#000;font-weight:bold;">Giờ</div><div class="a" style="left:704.5px;width:400px;text-align:center;top:278.0px;font-size:13.1px;line-height:18px;color:#000;font-weight:bold;">Công+</div><div class="a" style="left:760.5px;width:400px;text-align:center;top:278.0px;font-size:13.1px;line-height:18px;color:#000;font-weight:bold;">Giờ+</div><div class="a" style="left:816.5px;width:400px;text-align:center;top:278.0px;font-size:13.1px;line-height:18px;color:#000;font-weight:bold;">Vào trễ</div><div class="a" style="left:872.5px;width:400px;text-align:center;top:278.0px;font-size:13.1px;line-height:18px;color:#000;font-weight:bold;">Ra sớm</div><div class="a" style="left:921.5px;width:400px;text-align:center;top:278.0px;font-size:13.1px;line-height:18px;color:#000;font-weight:bold;">TC1</div><div class="a" style="left:963.5px;width:400px;text-align:center;top:278.0px;font-size:13.1px;line-height:18px;color:#000;font-weight:bold;">TC2</div><div class="a" style="left:1005.5px;width:400px;text-align:center;top:278.0px;font-size:13.1px;line-height:18px;color:#000;font-weight:bold;">TC3</div><div class="a" style="left:1054.5px;width:400px;text-align:center;top:278.0px;font-size:13.1px;line-height:18px;color:#000;font-weight:bold;">Tên ca</div><div class="a" style="left:1110.5px;width:400px;text-align:center;top:278.0px;font-size:13.1px;line-height:18px;color:#000;font-weight:bold;">K.hiệu</div><div class="a" style="left:1166.5px;width:400px;text-align:center;top:278.0px;font-size:13.1px;line-height:18px;color:#000;font-weight:bold;">K.hiệu +</div><div class="a" style="left:1221.5px;width:400px;text-align:center;top:268.5px;font-size:13.3px;line-height:18px;color:#000;font-weight:bold;">Tổng</div><div class="a" style="left:1221.5px;width:400px;text-align:center;top:288.0px;font-size:13.3px;line-height:18px;color:#000;font-weight:bold;">giờ</div><div class="a" style="left:24px;top:325px;width:1427px;height:1px;background:repeating-linear-gradient(to right,#000 0,#000 2px,transparent 2px,transparent 4px)"></div><div class="a" style="left:24px;top:345px;width:1427px;height:1px;background:repeating-linear-gradient(to right,#000 0,#000 2px,transparent 2px,transparent 4px)"></div><div class="a" style="left:24px;top:365px;width:1427px;height:1px;background:repeating-linear-gradient(to right,#000 0,#000 2px,transparent 2px,transparent 4px)"></div><div class="a" style="left:24px;top:385px;width:1427px;height:1px;background:repeating-linear-gradient(to right,#000 0,#000 2px,transparent 2px,transparent 4px)"></div><div class="a" style="left:24px;top:405px;width:1427px;height:1px;background:repeating-linear-gradient(to right,#000 0,#000 2px,transparent 2px,transparent 4px)"></div><div class="a" style="left:24px;top:425px;width:1427px;height:1px;background:repeating-linear-gradient(to right,#000 0,#000 2px,transparent 2px,transparent 4px)"></div><div class="a" style="left:24px;top:445px;width:1427px;height:1px;background:repeating-linear-gradient(to right,#000 0,#000 2px,transparent 2px,transparent 4px)"></div><div class="a" style="left:24px;top:465px;width:1427px;height:1px;background:repeating-linear-gradient(to right,#000 0,#000 2px,transparent 2px,transparent 4px)"></div><div class="a" style="left:24px;top:485px;width:1427px;height:1px;background:repeating-linear-gradient(to right,#000 0,#000 2px,transparent 2px,transparent 4px)"></div><div class="a" style="left:24px;top:505px;width:1427px;height:1px;background:repeating-linear-gradient(to right,#000 0,#000 2px,transparent 2px,transparent 4px)"></div><div class="a" style="left:24px;top:525px;width:1427px;height:1px;background:repeating-linear-gradient(to right,#000 0,#000 2px,transparent 2px,transparent 4px)"></div><div class="a" style="left:24px;top:545px;width:1427px;height:1px;background:repeating-linear-gradient(to right,#000 0,#000 2px,transparent 2px,transparent 4px)"></div><div class="a" style="left:24px;top:565px;width:1427px;height:1px;background:repeating-linear-gradient(to right,#000 0,#000 2px,transparent 2px,transparent 4px)"></div><div class="a" style="left:24px;top:585px;width:1427px;height:1px;background:repeating-linear-gradient(to right,#000 0,#000 2px,transparent 2px,transparent 4px)"></div><div class="a" style="left:24px;top:605px;width:1427px;height:1px;background:repeating-linear-gradient(to right,#000 0,#000 2px,transparent 2px,transparent 4px)"></div><div class="a" style="left:24px;top:625px;width:1427px;height:1px;background:repeating-linear-gradient(to right,#000 0,#000 2px,transparent 2px,transparent 4px)"></div><div class="a" style="left:24px;top:645px;width:1427px;height:1px;background:repeating-linear-gradient(to right,#000 0,#000 2px,transparent 2px,transparent 4px)"></div><div class="a" style="left:24px;top:665px;width:1427px;height:1px;background:repeating-linear-gradient(to right,#000 0,#000 2px,transparent 2px,transparent 4px)"></div><div class="a" style="left:24px;top:685px;width:1427px;height:1px;background:repeating-linear-gradient(to right,#000 0,#000 2px,transparent 2px,transparent 4px)"></div><div class="a" style="left:24px;top:705px;width:1427px;height:1px;background:repeating-linear-gradient(to right,#000 0,#000 2px,transparent 2px,transparent 4px)"></div><div class="a" style="left:24px;top:725px;width:1427px;height:1px;background:repeating-linear-gradient(to right,#000 0,#000 2px,transparent 2px,transparent 4px)"></div><svg class="a" style="left:23px;top:306px" width="7" height="7" viewBox="0 0 7 7"><path d="M0 0H6L0 6Z" fill="#008000"/></svg><div class="a" style="left:25px;top:307.5px;font-size:13px;line-height:18px;color:#000;font-weight:normal;">00129</div><div class="a" style="left:130px;top:307.5px;font-size:13px;line-height:18px;color:#000;font-weight:normal;transform:scaleX(1.06);transform-origin:0 0">Nguyễn văn Đến</div><div class="a" style="left:305px;top:307.5px;font-size:13px;line-height:18px;color:#000;font-weight:normal;transform:scaleX(1.07);transform-origin:0 0">Văn phòng</div><div class="a" style="left:410px;top:307.5px;font-size:13px;line-height:18px;color:#000;font-weight:normal;transform:scaleX(1.025);transform-origin:0 0">Chưa sắp xếp</div><div class="a" style="left:296px;width:298px;text-align:right;top:307.5px;font-size:13px;line-height:18px;color:#000;transform:scaleX(1.03);transform-origin:100% 0">01-10-2019</div><div class="a" style="left:599px;top:307.5px;font-size:13px;line-height:18px;color:#000;font-weight:normal;transform:scaleX(1.0);transform-origin:0 0">T.3</div><div class="a" style="left:520px;width:298px;text-align:right;top:307.5px;font-size:13px;line-height:18px;color:#000;transform:scaleX(1.0);transform-origin:100% 0">0,000</div><div class="a" style="left:576px;width:298px;text-align:right;top:307.5px;font-size:13px;line-height:18px;color:#000;transform:scaleX(1.0);transform-origin:100% 0">0,000</div><div class="a" style="left:632px;width:298px;text-align:right;top:307.5px;font-size:13px;line-height:18px;color:#000;transform:scaleX(1.0);transform-origin:100% 0">1,000</div><div class="a" style="left:688px;width:298px;text-align:right;top:307.5px;font-size:13px;line-height:18px;color:#000;transform:scaleX(1.0);transform-origin:100% 0">8,000</div><div class="a" style="left:744px;width:298px;text-align:right;top:307.5px;font-size:13px;line-height:18px;color:#000;transform:scaleX(1.0);transform-origin:100% 0">0</div><div class="a" style="left:800px;width:298px;text-align:right;top:307.5px;font-size:13px;line-height:18px;color:#000;transform:scaleX(1.0);transform-origin:100% 0">0</div><div class="a" style="left:842px;width:298px;text-align:right;top:307.5px;font-size:13px;line-height:18px;color:#000;transform:scaleX(1.0);transform-origin:100% 0">0,000</div><div class="a" style="left:884px;width:298px;text-align:right;top:307.5px;font-size:13px;line-height:18px;color:#000;transform:scaleX(1.0);transform-origin:100% 0">0,000</div><div class="a" style="left:926px;width:298px;text-align:right;top:307.5px;font-size:13px;line-height:18px;color:#000;transform:scaleX(1.0);transform-origin:100% 0">0,000</div><div class="a" style="left:1229px;top:307.5px;font-size:13px;line-height:18px;color:#000;font-weight:normal;transform:scaleX(1.0);transform-origin:0 0">--</div><div class="a" style="left:1285px;top:307.5px;font-size:13px;line-height:18px;color:#000;font-weight:normal;transform:scaleX(1.0);transform-origin:0 0">V</div><div class="a" style="left:1341px;top:307.5px;font-size:13px;line-height:18px;color:#000;font-weight:normal;transform:scaleX(1.0);transform-origin:0 0">V</div><div class="a" style="left:1150px;width:298px;text-align:right;top:307.5px;font-size:13px;line-height:18px;color:#000;transform:scaleX(1.0);transform-origin:100% 0">0,000</div><svg class="a" style="left:23px;top:326px" width="7" height="7" viewBox="0 0 7 7"><path d="M0 0H6L0 6Z" fill="#008000"/></svg><div class="a" style="left:25px;top:327.5px;font-size:13px;line-height:18px;color:#000;font-weight:normal;">00129</div><div class="a" style="left:130px;top:327.5px;font-size:13px;line-height:18px;color:#000;font-weight:normal;transform:scaleX(1.06);transform-origin:0 0">Nguyễn văn Đến</div><div class="a" style="left:305px;top:327.5px;font-size:13px;line-height:18px;color:#000;font-weight:normal;transform:scaleX(1.07);transform-origin:0 0">Văn phòng</div><div class="a" style="left:410px;top:327.5px;font-size:13px;line-height:18px;color:#000;font-weight:normal;transform:scaleX(1.025);transform-origin:0 0">Chưa sắp xếp</div><div class="a" style="left:296px;width:298px;text-align:right;top:327.5px;font-size:13px;line-height:18px;color:#000;transform:scaleX(1.03);transform-origin:100% 0">02-10-2019</div><div class="a" style="left:599px;top:327.5px;font-size:13px;line-height:18px;color:#000;font-weight:normal;transform:scaleX(1.0);transform-origin:0 0">T.4</div><div class="a" style="left:655px;top:327.5px;font-size:13px;line-height:18px;color:#000;font-weight:normal;transform:scaleX(1.045);transform-origin:0 0">07:30</div><div class="a" style="left:520px;width:298px;text-align:right;top:327.5px;font-size:13px;line-height:18px;color:#000;transform:scaleX(1.0);transform-origin:100% 0">0,000</div><div class="a" style="left:576px;width:298px;text-align:right;top:327.5px;font-size:13px;line-height:18px;color:#000;transform:scaleX(1.0);transform-origin:100% 0">0,000</div><div class="a" style="left:632px;width:298px;text-align:right;top:327.5px;font-size:13px;line-height:18px;color:#000;transform:scaleX(1.0);transform-origin:100% 0">0,000</div><div class="a" style="left:688px;width:298px;text-align:right;top:327.5px;font-size:13px;line-height:18px;color:#000;transform:scaleX(1.0);transform-origin:100% 0">0,000</div><div class="a" style="left:744px;width:298px;text-align:right;top:327.5px;font-size:13px;line-height:18px;color:#000;transform:scaleX(1.0);transform-origin:100% 0">0</div><div class="a" style="left:800px;width:298px;text-align:right;top:327.5px;font-size:13px;line-height:18px;color:#000;transform:scaleX(1.0);transform-origin:100% 0">0</div><div class="a" style="left:842px;width:298px;text-align:right;top:327.5px;font-size:13px;line-height:18px;color:#000;transform:scaleX(1.0);transform-origin:100% 0">0,000</div><div class="a" style="left:884px;width:298px;text-align:right;top:327.5px;font-size:13px;line-height:18px;color:#000;transform:scaleX(1.0);transform-origin:100% 0">0,000</div><div class="a" style="left:926px;width:298px;text-align:right;top:327.5px;font-size:13px;line-height:18px;color:#000;transform:scaleX(1.0);transform-origin:100% 0">0,000</div><div class="a" style="left:1229px;top:327.5px;font-size:13px;line-height:18px;color:#000;font-weight:normal;transform:scaleX(1.0);transform-origin:0 0">HC</div><div class="a" style="left:1285px;top:327.5px;font-size:13px;line-height:18px;color:#000;font-weight:normal;transform:scaleX(1.0);transform-origin:0 0">KR</div><div class="a" style="left:1150px;width:298px;text-align:right;top:327.5px;font-size:13px;line-height:18px;color:#000;transform:scaleX(1.0);transform-origin:100% 0">0,000</div><svg class="a" style="left:23px;top:346px" width="7" height="7" viewBox="0 0 7 7"><path d="M0 0H6L0 6Z" fill="#008000"/></svg><div class="a" style="left:25px;top:347.5px;font-size:13px;line-height:18px;color:#000;font-weight:normal;">00129</div><div class="a" style="left:130px;top:347.5px;font-size:13px;line-height:18px;color:#000;font-weight:normal;transform:scaleX(1.06);transform-origin:0 0">Nguyễn văn Đến</div><div class="a" style="left:305px;top:347.5px;font-size:13px;line-height:18px;color:#000;font-weight:normal;transform:scaleX(1.07);transform-origin:0 0">Văn phòng</div><div class="a" style="left:410px;top:347.5px;font-size:13px;line-height:18px;color:#000;font-weight:normal;transform:scaleX(1.025);transform-origin:0 0">Chưa sắp xếp</div><div class="a" style="left:296px;width:298px;text-align:right;top:347.5px;font-size:13px;line-height:18px;color:#000;transform:scaleX(1.03);transform-origin:100% 0">03-10-2019</div><div class="a" style="left:599px;top:347.5px;font-size:13px;line-height:18px;color:#000;font-weight:normal;transform:scaleX(1.0);transform-origin:0 0">T.5</div><div class="a" style="left:520px;width:298px;text-align:right;top:347.5px;font-size:13px;line-height:18px;color:#000;transform:scaleX(1.0);transform-origin:100% 0">0,000</div><div class="a" style="left:576px;width:298px;text-align:right;top:347.5px;font-size:13px;line-height:18px;color:#000;transform:scaleX(1.0);transform-origin:100% 0">0,000</div><div class="a" style="left:632px;width:298px;text-align:right;top:347.5px;font-size:13px;line-height:18px;color:#000;transform:scaleX(1.0);transform-origin:100% 0">1,000</div><div class="a" style="left:688px;width:298px;text-align:right;top:347.5px;font-size:13px;line-height:18px;color:#000;transform:scaleX(1.0);transform-origin:100% 0">8,000</div><div class="a" style="left:744px;width:298px;text-align:right;top:347.5px;font-size:13px;line-height:18px;color:#000;transform:scaleX(1.0);transform-origin:100% 0">0</div><div class="a" style="left:800px;width:298px;text-align:right;top:347.5px;font-size:13px;line-height:18px;color:#000;transform:scaleX(1.0);transform-origin:100% 0">0</div><div class="a" style="left:842px;width:298px;text-align:right;top:347.5px;font-size:13px;line-height:18px;color:#000;transform:scaleX(1.0);transform-origin:100% 0">0,000</div><div class="a" style="left:884px;width:298px;text-align:right;top:347.5px;font-size:13px;line-height:18px;color:#000;transform:scaleX(1.0);transform-origin:100% 0">0,000</div><div class="a" style="left:926px;width:298px;text-align:right;top:347.5px;font-size:13px;line-height:18px;color:#000;transform:scaleX(1.0);transform-origin:100% 0">0,000</div><div class="a" style="left:1229px;top:347.5px;font-size:13px;line-height:18px;color:#000;font-weight:normal;transform:scaleX(1.0);transform-origin:0 0">--</div><div class="a" style="left:1285px;top:347.5px;font-size:13px;line-height:18px;color:#000;font-weight:normal;transform:scaleX(1.0);transform-origin:0 0">V</div><div class="a" style="left:1341px;top:347.5px;font-size:13px;line-height:18px;color:#000;font-weight:normal;transform:scaleX(1.0);transform-origin:0 0">V</div><div class="a" style="left:1150px;width:298px;text-align:right;top:347.5px;font-size:13px;line-height:18px;color:#000;transform:scaleX(1.0);transform-origin:100% 0">0,000</div><svg class="a" style="left:23px;top:366px" width="7" height="7" viewBox="0 0 7 7"><path d="M0 0H6L0 6Z" fill="#008000"/></svg><div class="a" style="left:25px;top:367.5px;font-size:13px;line-height:18px;color:#000;font-weight:normal;">00129</div><div class="a" style="left:130px;top:367.5px;font-size:13px;line-height:18px;color:#000;font-weight:normal;transform:scaleX(1.06);transform-origin:0 0">Nguyễn văn Đến</div><div class="a" style="left:305px;top:367.5px;font-size:13px;line-height:18px;color:#000;font-weight:normal;transform:scaleX(1.07);transform-origin:0 0">Văn phòng</div><div class="a" style="left:410px;top:367.5px;font-size:13px;line-height:18px;color:#000;font-weight:normal;transform:scaleX(1.025);transform-origin:0 0">Chưa sắp xếp</div><div class="a" style="left:296px;width:298px;text-align:right;top:367.5px;font-size:13px;line-height:18px;color:#000;transform:scaleX(1.03);transform-origin:100% 0">04-10-2019</div><div class="a" style="left:599px;top:367.5px;font-size:13px;line-height:18px;color:#000;font-weight:normal;transform:scaleX(1.0);transform-origin:0 0">T.6</div><div class="a" style="left:520px;width:298px;text-align:right;top:367.5px;font-size:13px;line-height:18px;color:#000;transform:scaleX(1.0);transform-origin:100% 0">0,000</div><div class="a" style="left:576px;width:298px;text-align:right;top:367.5px;font-size:13px;line-height:18px;color:#000;transform:scaleX(1.0);transform-origin:100% 0">0,000</div><div class="a" style="left:632px;width:298px;text-align:right;top:367.5px;font-size:13px;line-height:18px;color:#000;transform:scaleX(1.0);transform-origin:100% 0">1,000</div><div class="a" style="left:688px;width:298px;text-align:right;top:367.5px;font-size:13px;line-height:18px;color:#000;transform:scaleX(1.0);transform-origin:100% 0">8,000</div><div class="a" style="left:744px;width:298px;text-align:right;top:367.5px;font-size:13px;line-height:18px;color:#000;transform:scaleX(1.0);transform-origin:100% 0">0</div><div class="a" style="left:800px;width:298px;text-align:right;top:367.5px;font-size:13px;line-height:18px;color:#000;transform:scaleX(1.0);transform-origin:100% 0">0</div><div class="a" style="left:842px;width:298px;text-align:right;top:367.5px;font-size:13px;line-height:18px;color:#000;transform:scaleX(1.0);transform-origin:100% 0">0,000</div><div class="a" style="left:884px;width:298px;text-align:right;top:367.5px;font-size:13px;line-height:18px;color:#000;transform:scaleX(1.0);transform-origin:100% 0">0,000</div><div class="a" style="left:926px;width:298px;text-align:right;top:367.5px;font-size:13px;line-height:18px;color:#000;transform:scaleX(1.0);transform-origin:100% 0">0,000</div><div class="a" style="left:1229px;top:367.5px;font-size:13px;line-height:18px;color:#000;font-weight:normal;transform:scaleX(1.0);transform-origin:0 0">--</div><div class="a" style="left:1285px;top:367.5px;font-size:13px;line-height:18px;color:#000;font-weight:normal;transform:scaleX(1.0);transform-origin:0 0">V</div><div class="a" style="left:1341px;top:367.5px;font-size:13px;line-height:18px;color:#000;font-weight:normal;transform:scaleX(1.0);transform-origin:0 0">V</div><div class="a" style="left:1150px;width:298px;text-align:right;top:367.5px;font-size:13px;line-height:18px;color:#000;transform:scaleX(1.0);transform-origin:100% 0">0,000</div><svg class="a" style="left:23px;top:386px" width="7" height="7" viewBox="0 0 7 7"><path d="M0 0H6L0 6Z" fill="#008000"/></svg><div class="a" style="left:25px;top:387.5px;font-size:13px;line-height:18px;color:#000;font-weight:normal;">00129</div><div class="a" style="left:130px;top:387.5px;font-size:13px;line-height:18px;color:#000;font-weight:normal;transform:scaleX(1.06);transform-origin:0 0">Nguyễn văn Đến</div><div class="a" style="left:305px;top:387.5px;font-size:13px;line-height:18px;color:#000;font-weight:normal;transform:scaleX(1.07);transform-origin:0 0">Văn phòng</div><div class="a" style="left:410px;top:387.5px;font-size:13px;line-height:18px;color:#000;font-weight:normal;transform:scaleX(1.025);transform-origin:0 0">Chưa sắp xếp</div><div class="a" style="left:296px;width:298px;text-align:right;top:387.5px;font-size:13px;line-height:18px;color:#000;transform:scaleX(1.03);transform-origin:100% 0">05-10-2019</div><div class="a" style="left:599px;top:387.5px;font-size:13px;line-height:18px;color:#000;font-weight:normal;transform:scaleX(1.0);transform-origin:0 0">T.7</div><div class="a" style="left:520px;width:298px;text-align:right;top:387.5px;font-size:13px;line-height:18px;color:#000;transform:scaleX(1.0);transform-origin:100% 0">0,000</div><div class="a" style="left:576px;width:298px;text-align:right;top:387.5px;font-size:13px;line-height:18px;color:#000;transform:scaleX(1.0);transform-origin:100% 0">0,000</div><div class="a" style="left:632px;width:298px;text-align:right;top:387.5px;font-size:13px;line-height:18px;color:#000;transform:scaleX(1.0);transform-origin:100% 0">0,000</div><div class="a" style="left:688px;width:298px;text-align:right;top:387.5px;font-size:13px;line-height:18px;color:#000;transform:scaleX(1.0);transform-origin:100% 0">0,000</div><div class="a" style="left:744px;width:298px;text-align:right;top:387.5px;font-size:13px;line-height:18px;color:#000;transform:scaleX(1.0);transform-origin:100% 0">0</div><div class="a" style="left:800px;width:298px;text-align:right;top:387.5px;font-size:13px;line-height:18px;color:#000;transform:scaleX(1.0);transform-origin:100% 0">0</div><div class="a" style="left:842px;width:298px;text-align:right;top:387.5px;font-size:13px;line-height:18px;color:#000;transform:scaleX(1.0);transform-origin:100% 0">0,000</div><div class="a" style="left:884px;width:298px;text-align:right;top:387.5px;font-size:13px;line-height:18px;color:#000;transform:scaleX(1.0);transform-origin:100% 0">0,000</div><div class="a" style="left:926px;width:298px;text-align:right;top:387.5px;font-size:13px;line-height:18px;color:#000;transform:scaleX(1.0);transform-origin:100% 0">0,000</div><div class="a" style="left:1229px;top:387.5px;font-size:13px;line-height:18px;color:#000;font-weight:normal;transform:scaleX(1.0);transform-origin:0 0">--</div><div class="a" style="left:1285px;top:387.5px;font-size:13px;line-height:18px;color:#000;font-weight:normal;transform:scaleX(1.0);transform-origin:0 0">--</div><div class="a" style="left:1150px;width:298px;text-align:right;top:387.5px;font-size:13px;line-height:18px;color:#000;transform:scaleX(1.0);transform-origin:100% 0">0,000</div><svg class="a" style="left:23px;top:406px" width="7" height="7" viewBox="0 0 7 7"><path d="M0 0H6L0 6Z" fill="#008000"/></svg><div class="a" style="left:25px;top:407.5px;font-size:13px;line-height:18px;color:#000;font-weight:normal;">00129</div><div class="a" style="left:130px;top:407.5px;font-size:13px;line-height:18px;color:#000;font-weight:normal;transform:scaleX(1.06);transform-origin:0 0">Nguyễn văn Đến</div><div class="a" style="left:305px;top:407.5px;font-size:13px;line-height:18px;color:#000;font-weight:normal;transform:scaleX(1.07);transform-origin:0 0">Văn phòng</div><div class="a" style="left:410px;top:407.5px;font-size:13px;line-height:18px;color:#000;font-weight:normal;transform:scaleX(1.025);transform-origin:0 0">Chưa sắp xếp</div><div class="a" style="left:296px;width:298px;text-align:right;top:407.5px;font-size:13px;line-height:18px;color:#000;transform:scaleX(1.03);transform-origin:100% 0">06-10-2019</div><div class="a" style="left:599px;top:407.5px;font-size:13px;line-height:18px;color:#000;font-weight:normal;transform:scaleX(1.0);transform-origin:0 0">CN</div><div class="a" style="left:520px;width:298px;text-align:right;top:407.5px;font-size:13px;line-height:18px;color:#000;transform:scaleX(1.0);transform-origin:100% 0">0,000</div><div class="a" style="left:576px;width:298px;text-align:right;top:407.5px;font-size:13px;line-height:18px;color:#000;transform:scaleX(1.0);transform-origin:100% 0">0,000</div><div class="a" style="left:632px;width:298px;text-align:right;top:407.5px;font-size:13px;line-height:18px;color:#000;transform:scaleX(1.0);transform-origin:100% 0">1,000</div><div class="a" style="left:688px;width:298px;text-align:right;top:407.5px;font-size:13px;line-height:18px;color:#000;transform:scaleX(1.0);transform-origin:100% 0">8,000</div><div class="a" style="left:744px;width:298px;text-align:right;top:407.5px;font-size:13px;line-height:18px;color:#000;transform:scaleX(1.0);transform-origin:100% 0">0</div><div class="a" style="left:800px;width:298px;text-align:right;top:407.5px;font-size:13px;line-height:18px;color:#000;transform:scaleX(1.0);transform-origin:100% 0">0</div><div class="a" style="left:842px;width:298px;text-align:right;top:407.5px;font-size:13px;line-height:18px;color:#000;transform:scaleX(1.0);transform-origin:100% 0">0,000</div><div class="a" style="left:884px;width:298px;text-align:right;top:407.5px;font-size:13px;line-height:18px;color:#000;transform:scaleX(1.0);transform-origin:100% 0">0,000</div><div class="a" style="left:926px;width:298px;text-align:right;top:407.5px;font-size:13px;line-height:18px;color:#000;transform:scaleX(1.0);transform-origin:100% 0">0,000</div><div class="a" style="left:1229px;top:407.5px;font-size:13px;line-height:18px;color:#000;font-weight:normal;transform:scaleX(1.0);transform-origin:0 0">--</div><div class="a" style="left:1285px;top:407.5px;font-size:13px;line-height:18px;color:#000;font-weight:normal;transform:scaleX(1.0);transform-origin:0 0">V</div><div class="a" style="left:1341px;top:407.5px;font-size:13px;line-height:18px;color:#000;font-weight:normal;transform:scaleX(1.0);transform-origin:0 0">V</div><div class="a" style="left:1150px;width:298px;text-align:right;top:407.5px;font-size:13px;line-height:18px;color:#000;transform:scaleX(1.0);transform-origin:100% 0">0,000</div><svg class="a" style="left:23px;top:426px" width="7" height="7" viewBox="0 0 7 7"><path d="M0 0H6L0 6Z" fill="#008000"/></svg><div class="a" style="left:25px;top:427.5px;font-size:13px;line-height:18px;color:#000;font-weight:normal;">00129</div><div class="a" style="left:130px;top:427.5px;font-size:13px;line-height:18px;color:#000;font-weight:normal;transform:scaleX(1.06);transform-origin:0 0">Nguyễn văn Đến</div><div class="a" style="left:305px;top:427.5px;font-size:13px;line-height:18px;color:#000;font-weight:normal;transform:scaleX(1.07);transform-origin:0 0">Văn phòng</div><div class="a" style="left:410px;top:427.5px;font-size:13px;line-height:18px;color:#000;font-weight:normal;transform:scaleX(1.025);transform-origin:0 0">Chưa sắp xếp</div><div class="a" style="left:296px;width:298px;text-align:right;top:427.5px;font-size:13px;line-height:18px;color:#000;transform:scaleX(1.03);transform-origin:100% 0">07-10-2019</div><div class="a" style="left:599px;top:427.5px;font-size:13px;line-height:18px;color:#000;font-weight:normal;transform:scaleX(1.0);transform-origin:0 0">T.2</div><div class="a" style="left:520px;width:298px;text-align:right;top:427.5px;font-size:13px;line-height:18px;color:#000;transform:scaleX(1.0);transform-origin:100% 0">0,000</div><div class="a" style="left:576px;width:298px;text-align:right;top:427.5px;font-size:13px;line-height:18px;color:#000;transform:scaleX(1.0);transform-origin:100% 0">0,000</div><div class="a" style="left:632px;width:298px;text-align:right;top:427.5px;font-size:13px;line-height:18px;color:#000;transform:scaleX(1.0);transform-origin:100% 0">1,000</div><div class="a" style="left:688px;width:298px;text-align:right;top:427.5px;font-size:13px;line-height:18px;color:#000;transform:scaleX(1.0);transform-origin:100% 0">8,000</div><div class="a" style="left:744px;width:298px;text-align:right;top:427.5px;font-size:13px;line-height:18px;color:#000;transform:scaleX(1.0);transform-origin:100% 0">0</div><div class="a" style="left:800px;width:298px;text-align:right;top:427.5px;font-size:13px;line-height:18px;color:#000;transform:scaleX(1.0);transform-origin:100% 0">0</div><div class="a" style="left:842px;width:298px;text-align:right;top:427.5px;font-size:13px;line-height:18px;color:#000;transform:scaleX(1.0);transform-origin:100% 0">0,000</div><div class="a" style="left:884px;width:298px;text-align:right;top:427.5px;font-size:13px;line-height:18px;color:#000;transform:scaleX(1.0);transform-origin:100% 0">0,000</div><div class="a" style="left:926px;width:298px;text-align:right;top:427.5px;font-size:13px;line-height:18px;color:#000;transform:scaleX(1.0);transform-origin:100% 0">0,000</div><div class="a" style="left:1229px;top:427.5px;font-size:13px;line-height:18px;color:#000;font-weight:normal;transform:scaleX(1.0);transform-origin:0 0">--</div><div class="a" style="left:1285px;top:427.5px;font-size:13px;line-height:18px;color:#000;font-weight:normal;transform:scaleX(1.0);transform-origin:0 0">V</div><div class="a" style="left:1341px;top:427.5px;font-size:13px;line-height:18px;color:#000;font-weight:normal;transform:scaleX(1.0);transform-origin:0 0">V</div><div class="a" style="left:1150px;width:298px;text-align:right;top:427.5px;font-size:13px;line-height:18px;color:#000;transform:scaleX(1.0);transform-origin:100% 0">0,000</div><svg class="a" style="left:23px;top:446px" width="7" height="7" viewBox="0 0 7 7"><path d="M0 0H6L0 6Z" fill="#008000"/></svg><div class="a" style="left:25px;top:447.5px;font-size:13px;line-height:18px;color:#000;font-weight:normal;">00129</div><div class="a" style="left:130px;top:447.5px;font-size:13px;line-height:18px;color:#000;font-weight:normal;transform:scaleX(1.06);transform-origin:0 0">Nguyễn văn Đến</div><div class="a" style="left:305px;top:447.5px;font-size:13px;line-height:18px;color:#000;font-weight:normal;transform:scaleX(1.07);transform-origin:0 0">Văn phòng</div><div class="a" style="left:410px;top:447.5px;font-size:13px;line-height:18px;color:#000;font-weight:normal;transform:scaleX(1.025);transform-origin:0 0">Chưa sắp xếp</div><div class="a" style="left:296px;width:298px;text-align:right;top:447.5px;font-size:13px;line-height:18px;color:#000;transform:scaleX(1.03);transform-origin:100% 0">08-10-2019</div><div class="a" style="left:599px;top:447.5px;font-size:13px;line-height:18px;color:#000;font-weight:normal;transform:scaleX(1.0);transform-origin:0 0">T.3</div><div class="a" style="left:520px;width:298px;text-align:right;top:447.5px;font-size:13px;line-height:18px;color:#000;transform:scaleX(1.0);transform-origin:100% 0">0,000</div><div class="a" style="left:576px;width:298px;text-align:right;top:447.5px;font-size:13px;line-height:18px;color:#000;transform:scaleX(1.0);transform-origin:100% 0">0,000</div><div class="a" style="left:632px;width:298px;text-align:right;top:447.5px;font-size:13px;line-height:18px;color:#000;transform:scaleX(1.0);transform-origin:100% 0">1,000</div><div class="a" style="left:688px;width:298px;text-align:right;top:447.5px;font-size:13px;line-height:18px;color:#000;transform:scaleX(1.0);transform-origin:100% 0">8,000</div><div class="a" style="left:744px;width:298px;text-align:right;top:447.5px;font-size:13px;line-height:18px;color:#000;transform:scaleX(1.0);transform-origin:100% 0">0</div><div class="a" style="left:800px;width:298px;text-align:right;top:447.5px;font-size:13px;line-height:18px;color:#000;transform:scaleX(1.0);transform-origin:100% 0">0</div><div class="a" style="left:842px;width:298px;text-align:right;top:447.5px;font-size:13px;line-height:18px;color:#000;transform:scaleX(1.0);transform-origin:100% 0">0,000</div><div class="a" style="left:884px;width:298px;text-align:right;top:447.5px;font-size:13px;line-height:18px;color:#000;transform:scaleX(1.0);transform-origin:100% 0">0,000</div><div class="a" style="left:926px;width:298px;text-align:right;top:447.5px;font-size:13px;line-height:18px;color:#000;transform:scaleX(1.0);transform-origin:100% 0">0,000</div><div class="a" style="left:1229px;top:447.5px;font-size:13px;line-height:18px;color:#000;font-weight:normal;transform:scaleX(1.0);transform-origin:0 0">--</div><div class="a" style="left:1285px;top:447.5px;font-size:13px;line-height:18px;color:#000;font-weight:normal;transform:scaleX(1.0);transform-origin:0 0">V</div><div class="a" style="left:1341px;top:447.5px;font-size:13px;line-height:18px;color:#000;font-weight:normal;transform:scaleX(1.0);transform-origin:0 0">V</div><div class="a" style="left:1150px;width:298px;text-align:right;top:447.5px;font-size:13px;line-height:18px;color:#000;transform:scaleX(1.0);transform-origin:100% 0">0,000</div><svg class="a" style="left:23px;top:466px" width="7" height="7" viewBox="0 0 7 7"><path d="M0 0H6L0 6Z" fill="#008000"/></svg><div class="a" style="left:25px;top:467.5px;font-size:13px;line-height:18px;color:#000;font-weight:normal;">00129</div><div class="a" style="left:130px;top:467.5px;font-size:13px;line-height:18px;color:#000;font-weight:normal;transform:scaleX(1.06);transform-origin:0 0">Nguyễn văn Đến</div><div class="a" style="left:305px;top:467.5px;font-size:13px;line-height:18px;color:#000;font-weight:normal;transform:scaleX(1.07);transform-origin:0 0">Văn phòng</div><div class="a" style="left:410px;top:467.5px;font-size:13px;line-height:18px;color:#000;font-weight:normal;transform:scaleX(1.025);transform-origin:0 0">Chưa sắp xếp</div><div class="a" style="left:296px;width:298px;text-align:right;top:467.5px;font-size:13px;line-height:18px;color:#000;transform:scaleX(1.03);transform-origin:100% 0">09-10-2019</div><div class="a" style="left:599px;top:467.5px;font-size:13px;line-height:18px;color:#000;font-weight:normal;transform:scaleX(1.0);transform-origin:0 0">T.4</div><div class="a" style="left:520px;width:298px;text-align:right;top:467.5px;font-size:13px;line-height:18px;color:#000;transform:scaleX(1.0);transform-origin:100% 0">0,000</div><div class="a" style="left:576px;width:298px;text-align:right;top:467.5px;font-size:13px;line-height:18px;color:#000;transform:scaleX(1.0);transform-origin:100% 0">0,000</div><div class="a" style="left:632px;width:298px;text-align:right;top:467.5px;font-size:13px;line-height:18px;color:#000;transform:scaleX(1.0);transform-origin:100% 0">1,000</div><div class="a" style="left:688px;width:298px;text-align:right;top:467.5px;font-size:13px;line-height:18px;color:#000;transform:scaleX(1.0);transform-origin:100% 0">8,000</div><div class="a" style="left:744px;width:298px;text-align:right;top:467.5px;font-size:13px;line-height:18px;color:#000;transform:scaleX(1.0);transform-origin:100% 0">0</div><div class="a" style="left:800px;width:298px;text-align:right;top:467.5px;font-size:13px;line-height:18px;color:#000;transform:scaleX(1.0);transform-origin:100% 0">0</div><div class="a" style="left:842px;width:298px;text-align:right;top:467.5px;font-size:13px;line-height:18px;color:#000;transform:scaleX(1.0);transform-origin:100% 0">0,000</div><div class="a" style="left:884px;width:298px;text-align:right;top:467.5px;font-size:13px;line-height:18px;color:#000;transform:scaleX(1.0);transform-origin:100% 0">0,000</div><div class="a" style="left:926px;width:298px;text-align:right;top:467.5px;font-size:13px;line-height:18px;color:#000;transform:scaleX(1.0);transform-origin:100% 0">0,000</div><div class="a" style="left:1229px;top:467.5px;font-size:13px;line-height:18px;color:#000;font-weight:normal;transform:scaleX(1.0);transform-origin:0 0">--</div><div class="a" style="left:1285px;top:467.5px;font-size:13px;line-height:18px;color:#000;font-weight:normal;transform:scaleX(1.0);transform-origin:0 0">V</div><div class="a" style="left:1341px;top:467.5px;font-size:13px;line-height:18px;color:#000;font-weight:normal;transform:scaleX(1.0);transform-origin:0 0">V</div><div class="a" style="left:1150px;width:298px;text-align:right;top:467.5px;font-size:13px;line-height:18px;color:#000;transform:scaleX(1.0);transform-origin:100% 0">0,000</div><svg class="a" style="left:23px;top:486px" width="7" height="7" viewBox="0 0 7 7"><path d="M0 0H6L0 6Z" fill="#008000"/></svg><div class="a" style="left:25px;top:487.5px;font-size:13px;line-height:18px;color:#000;font-weight:normal;">00129</div><div class="a" style="left:130px;top:487.5px;font-size:13px;line-height:18px;color:#000;font-weight:normal;transform:scaleX(1.06);transform-origin:0 0">Nguyễn văn Đến</div><div class="a" style="left:305px;top:487.5px;font-size:13px;line-height:18px;color:#000;font-weight:normal;transform:scaleX(1.07);transform-origin:0 0">Văn phòng</div><div class="a" style="left:410px;top:487.5px;font-size:13px;line-height:18px;color:#000;font-weight:normal;transform:scaleX(1.025);transform-origin:0 0">Chưa sắp xếp</div><div class="a" style="left:296px;width:298px;text-align:right;top:487.5px;font-size:13px;line-height:18px;color:#000;transform:scaleX(1.03);transform-origin:100% 0">10-10-2019</div><div class="a" style="left:599px;top:487.5px;font-size:13px;line-height:18px;color:#000;font-weight:normal;transform:scaleX(1.0);transform-origin:0 0">T.5</div><div class="a" style="left:655px;top:487.5px;font-size:13px;line-height:18px;color:#000;font-weight:normal;transform:scaleX(1.045);transform-origin:0 0">07:19</div><div class="a" style="left:711px;top:487.5px;font-size:13px;line-height:18px;color:#000;font-weight:normal;transform:scaleX(1.045);transform-origin:0 0">18:05</div><div class="a" style="left:520px;width:298px;text-align:right;top:487.5px;font-size:13px;line-height:18px;color:#000;transform:scaleX(1.0);transform-origin:100% 0">1,000</div><div class="a" style="left:576px;width:298px;text-align:right;top:487.5px;font-size:13px;line-height:18px;color:#000;transform:scaleX(1.0);transform-origin:100% 0">8,000</div><div class="a" style="left:632px;width:298px;text-align:right;top:487.5px;font-size:13px;line-height:18px;color:#000;transform:scaleX(1.0);transform-origin:100% 0">0,000</div><div class="a" style="left:688px;width:298px;text-align:right;top:487.5px;font-size:13px;line-height:18px;color:#000;transform:scaleX(1.0);transform-origin:100% 0">0,000</div><div class="a" style="left:744px;width:298px;text-align:right;top:487.5px;font-size:13px;line-height:18px;color:#000;transform:scaleX(1.0);transform-origin:100% 0">0</div><div class="a" style="left:800px;width:298px;text-align:right;top:487.5px;font-size:13px;line-height:18px;color:#000;transform:scaleX(1.0);transform-origin:100% 0">0</div><div class="a" style="left:842px;width:298px;text-align:right;top:487.5px;font-size:13px;line-height:18px;color:#000;transform:scaleX(1.0);transform-origin:100% 0">1,583</div><div class="a" style="left:884px;width:298px;text-align:right;top:487.5px;font-size:13px;line-height:18px;color:#000;transform:scaleX(1.0);transform-origin:100% 0">0,000</div><div class="a" style="left:926px;width:298px;text-align:right;top:487.5px;font-size:13px;line-height:18px;color:#000;transform:scaleX(1.0);transform-origin:100% 0">0,000</div><div class="a" style="left:1229px;top:487.5px;font-size:13px;line-height:18px;color:#000;font-weight:normal;transform:scaleX(1.0);transform-origin:0 0">HC</div><div class="a" style="left:1285px;top:487.5px;font-size:13px;line-height:18px;color:#000;font-weight:normal;transform:scaleX(1.0);transform-origin:0 0">X</div><div class="a" style="left:1150px;width:298px;text-align:right;top:487.5px;font-size:13px;line-height:18px;color:#000;transform:scaleX(1.0);transform-origin:100% 0">9,583</div><svg class="a" style="left:23px;top:506px" width="7" height="7" viewBox="0 0 7 7"><path d="M0 0H6L0 6Z" fill="#008000"/></svg><div class="a" style="left:25px;top:507.5px;font-size:13px;line-height:18px;color:#000;font-weight:normal;">00129</div><div class="a" style="left:130px;top:507.5px;font-size:13px;line-height:18px;color:#000;font-weight:normal;transform:scaleX(1.06);transform-origin:0 0">Nguyễn văn Đến</div><div class="a" style="left:305px;top:507.5px;font-size:13px;line-height:18px;color:#000;font-weight:normal;transform:scaleX(1.07);transform-origin:0 0">Văn phòng</div><div class="a" style="left:410px;top:507.5px;font-size:13px;line-height:18px;color:#000;font-weight:normal;transform:scaleX(1.025);transform-origin:0 0">Chưa sắp xếp</div><div class="a" style="left:296px;width:298px;text-align:right;top:507.5px;font-size:13px;line-height:18px;color:#000;transform:scaleX(1.03);transform-origin:100% 0">11-10-2019</div><div class="a" style="left:599px;top:507.5px;font-size:13px;line-height:18px;color:#000;font-weight:normal;transform:scaleX(1.0);transform-origin:0 0">T.6</div><div class="a" style="left:655px;top:507.5px;font-size:13px;line-height:18px;color:#000;font-weight:normal;transform:scaleX(1.045);transform-origin:0 0">07:14</div><div class="a" style="left:711px;top:507.5px;font-size:13px;line-height:18px;color:#000;font-weight:normal;transform:scaleX(1.045);transform-origin:0 0">18:07</div><div class="a" style="left:520px;width:298px;text-align:right;top:507.5px;font-size:13px;line-height:18px;color:#000;transform:scaleX(1.0);transform-origin:100% 0">1,000</div><div class="a" style="left:576px;width:298px;text-align:right;top:507.5px;font-size:13px;line-height:18px;color:#000;transform:scaleX(1.0);transform-origin:100% 0">8,000</div><div class="a" style="left:632px;width:298px;text-align:right;top:507.5px;font-size:13px;line-height:18px;color:#000;transform:scaleX(1.0);transform-origin:100% 0">0,000</div><div class="a" style="left:688px;width:298px;text-align:right;top:507.5px;font-size:13px;line-height:18px;color:#000;transform:scaleX(1.0);transform-origin:100% 0">0,000</div><div class="a" style="left:744px;width:298px;text-align:right;top:507.5px;font-size:13px;line-height:18px;color:#000;transform:scaleX(1.0);transform-origin:100% 0">0</div><div class="a" style="left:800px;width:298px;text-align:right;top:507.5px;font-size:13px;line-height:18px;color:#000;transform:scaleX(1.0);transform-origin:100% 0">0</div><div class="a" style="left:842px;width:298px;text-align:right;top:507.5px;font-size:13px;line-height:18px;color:#000;transform:scaleX(1.0);transform-origin:100% 0">1,617</div><div class="a" style="left:884px;width:298px;text-align:right;top:507.5px;font-size:13px;line-height:18px;color:#000;transform:scaleX(1.0);transform-origin:100% 0">0,000</div><div class="a" style="left:926px;width:298px;text-align:right;top:507.5px;font-size:13px;line-height:18px;color:#000;transform:scaleX(1.0);transform-origin:100% 0">0,000</div><div class="a" style="left:1229px;top:507.5px;font-size:13px;line-height:18px;color:#000;font-weight:normal;transform:scaleX(1.0);transform-origin:0 0">HC</div><div class="a" style="left:1285px;top:507.5px;font-size:13px;line-height:18px;color:#000;font-weight:normal;transform:scaleX(1.0);transform-origin:0 0">X</div><div class="a" style="left:1150px;width:298px;text-align:right;top:507.5px;font-size:13px;line-height:18px;color:#000;transform:scaleX(1.0);transform-origin:100% 0">9,617</div><svg class="a" style="left:23px;top:526px" width="7" height="7" viewBox="0 0 7 7"><path d="M0 0H6L0 6Z" fill="#008000"/></svg><div class="a" style="left:25px;top:527.5px;font-size:13px;line-height:18px;color:#000;font-weight:normal;">00129</div><div class="a" style="left:130px;top:527.5px;font-size:13px;line-height:18px;color:#000;font-weight:normal;transform:scaleX(1.06);transform-origin:0 0">Nguyễn văn Đến</div><div class="a" style="left:305px;top:527.5px;font-size:13px;line-height:18px;color:#000;font-weight:normal;transform:scaleX(1.07);transform-origin:0 0">Văn phòng</div><div class="a" style="left:410px;top:527.5px;font-size:13px;line-height:18px;color:#000;font-weight:normal;transform:scaleX(1.025);transform-origin:0 0">Chưa sắp xếp</div><div class="a" style="left:296px;width:298px;text-align:right;top:527.5px;font-size:13px;line-height:18px;color:#000;transform:scaleX(1.03);transform-origin:100% 0">12-10-2019</div><div class="a" style="left:599px;top:527.5px;font-size:13px;line-height:18px;color:#000;font-weight:normal;transform:scaleX(1.0);transform-origin:0 0">T.7</div><div class="a" style="left:655px;top:527.5px;font-size:13px;line-height:18px;color:#000;font-weight:normal;transform:scaleX(1.045);transform-origin:0 0">07:16</div><div class="a" style="left:711px;top:527.5px;font-size:13px;line-height:18px;color:#000;font-weight:normal;transform:scaleX(1.045);transform-origin:0 0">16:33</div><div class="a" style="left:520px;width:298px;text-align:right;top:527.5px;font-size:13px;line-height:18px;color:#000;transform:scaleX(1.0);transform-origin:100% 0">1,000</div><div class="a" style="left:576px;width:298px;text-align:right;top:527.5px;font-size:13px;line-height:18px;color:#000;transform:scaleX(1.0);transform-origin:100% 0">8,000</div><div class="a" style="left:632px;width:298px;text-align:right;top:527.5px;font-size:13px;line-height:18px;color:#000;transform:scaleX(1.0);transform-origin:100% 0">0,000</div><div class="a" style="left:688px;width:298px;text-align:right;top:527.5px;font-size:13px;line-height:18px;color:#000;transform:scaleX(1.0);transform-origin:100% 0">0,000</div><div class="a" style="left:744px;width:298px;text-align:right;top:527.5px;font-size:13px;line-height:18px;color:#000;transform:scaleX(1.0);transform-origin:100% 0">0</div><div class="a" style="left:800px;width:298px;text-align:right;top:527.5px;font-size:13px;line-height:18px;color:#000;transform:scaleX(1.0);transform-origin:100% 0">0</div><div class="a" style="left:842px;width:298px;text-align:right;top:527.5px;font-size:13px;line-height:18px;color:#000;transform:scaleX(1.0);transform-origin:100% 0">0,000</div><div class="a" style="left:884px;width:298px;text-align:right;top:527.5px;font-size:13px;line-height:18px;color:#000;transform:scaleX(1.0);transform-origin:100% 0">0,000</div><div class="a" style="left:926px;width:298px;text-align:right;top:527.5px;font-size:13px;line-height:18px;color:#000;transform:scaleX(1.0);transform-origin:100% 0">0,000</div><div class="a" style="left:1229px;top:527.5px;font-size:13px;line-height:18px;color:#000;font-weight:normal;transform:scaleX(1.0);transform-origin:0 0">HC</div><div class="a" style="left:1285px;top:527.5px;font-size:13px;line-height:18px;color:#000;font-weight:normal;transform:scaleX(1.0);transform-origin:0 0">X</div><div class="a" style="left:1150px;width:298px;text-align:right;top:527.5px;font-size:13px;line-height:18px;color:#000;transform:scaleX(1.0);transform-origin:100% 0">8,000</div><svg class="a" style="left:23px;top:546px" width="7" height="7" viewBox="0 0 7 7"><path d="M0 0H6L0 6Z" fill="#008000"/></svg><div class="a" style="left:25px;top:547.5px;font-size:13px;line-height:18px;color:#000;font-weight:normal;">00129</div><div class="a" style="left:130px;top:547.5px;font-size:13px;line-height:18px;color:#000;font-weight:normal;transform:scaleX(1.06);transform-origin:0 0">Nguyễn văn Đến</div><div class="a" style="left:305px;top:547.5px;font-size:13px;line-height:18px;color:#000;font-weight:normal;transform:scaleX(1.07);transform-origin:0 0">Văn phòng</div><div class="a" style="left:410px;top:547.5px;font-size:13px;line-height:18px;color:#000;font-weight:normal;transform:scaleX(1.025);transform-origin:0 0">Chưa sắp xếp</div><div class="a" style="left:296px;width:298px;text-align:right;top:547.5px;font-size:13px;line-height:18px;color:#000;transform:scaleX(1.03);transform-origin:100% 0">13-10-2019</div><div class="a" style="left:599px;top:547.5px;font-size:13px;line-height:18px;color:#000;font-weight:normal;transform:scaleX(1.0);transform-origin:0 0">CN</div><div class="a" style="left:520px;width:298px;text-align:right;top:547.5px;font-size:13px;line-height:18px;color:#000;transform:scaleX(1.0);transform-origin:100% 0">0,000</div><div class="a" style="left:576px;width:298px;text-align:right;top:547.5px;font-size:13px;line-height:18px;color:#000;transform:scaleX(1.0);transform-origin:100% 0">0,000</div><div class="a" style="left:632px;width:298px;text-align:right;top:547.5px;font-size:13px;line-height:18px;color:#000;transform:scaleX(1.0);transform-origin:100% 0">1,000</div><div class="a" style="left:688px;width:298px;text-align:right;top:547.5px;font-size:13px;line-height:18px;color:#000;transform:scaleX(1.0);transform-origin:100% 0">8,000</div><div class="a" style="left:744px;width:298px;text-align:right;top:547.5px;font-size:13px;line-height:18px;color:#000;transform:scaleX(1.0);transform-origin:100% 0">0</div><div class="a" style="left:800px;width:298px;text-align:right;top:547.5px;font-size:13px;line-height:18px;color:#000;transform:scaleX(1.0);transform-origin:100% 0">0</div><div class="a" style="left:842px;width:298px;text-align:right;top:547.5px;font-size:13px;line-height:18px;color:#000;transform:scaleX(1.0);transform-origin:100% 0">0,000</div><div class="a" style="left:884px;width:298px;text-align:right;top:547.5px;font-size:13px;line-height:18px;color:#000;transform:scaleX(1.0);transform-origin:100% 0">0,000</div><div class="a" style="left:926px;width:298px;text-align:right;top:547.5px;font-size:13px;line-height:18px;color:#000;transform:scaleX(1.0);transform-origin:100% 0">0,000</div><div class="a" style="left:1229px;top:547.5px;font-size:13px;line-height:18px;color:#000;font-weight:normal;transform:scaleX(1.0);transform-origin:0 0">--</div><div class="a" style="left:1285px;top:547.5px;font-size:13px;line-height:18px;color:#000;font-weight:normal;transform:scaleX(1.0);transform-origin:0 0">V</div><div class="a" style="left:1341px;top:547.5px;font-size:13px;line-height:18px;color:#000;font-weight:normal;transform:scaleX(1.0);transform-origin:0 0">V</div><div class="a" style="left:1150px;width:298px;text-align:right;top:547.5px;font-size:13px;line-height:18px;color:#000;transform:scaleX(1.0);transform-origin:100% 0">0,000</div><svg class="a" style="left:23px;top:566px" width="7" height="7" viewBox="0 0 7 7"><path d="M0 0H6L0 6Z" fill="#008000"/></svg><div class="a" style="left:25px;top:567.5px;font-size:13px;line-height:18px;color:#000;font-weight:normal;">00129</div><div class="a" style="left:130px;top:567.5px;font-size:13px;line-height:18px;color:#000;font-weight:normal;transform:scaleX(1.06);transform-origin:0 0">Nguyễn văn Đến</div><div class="a" style="left:305px;top:567.5px;font-size:13px;line-height:18px;color:#000;font-weight:normal;transform:scaleX(1.07);transform-origin:0 0">Văn phòng</div><div class="a" style="left:410px;top:567.5px;font-size:13px;line-height:18px;color:#000;font-weight:normal;transform:scaleX(1.025);transform-origin:0 0">Chưa sắp xếp</div><div class="a" style="left:296px;width:298px;text-align:right;top:567.5px;font-size:13px;line-height:18px;color:#000;transform:scaleX(1.03);transform-origin:100% 0">14-10-2019</div><div class="a" style="left:599px;top:567.5px;font-size:13px;line-height:18px;color:#000;font-weight:normal;transform:scaleX(1.0);transform-origin:0 0">T.2</div><div class="a" style="left:655px;top:567.5px;font-size:13px;line-height:18px;color:#000;font-weight:normal;transform:scaleX(1.045);transform-origin:0 0">07:22</div><div class="a" style="left:711px;top:567.5px;font-size:13px;line-height:18px;color:#000;font-weight:normal;transform:scaleX(1.045);transform-origin:0 0">17:57</div><div class="a" style="left:520px;width:298px;text-align:right;top:567.5px;font-size:13px;line-height:18px;color:#000;transform:scaleX(1.0);transform-origin:100% 0">1,000</div><div class="a" style="left:576px;width:298px;text-align:right;top:567.5px;font-size:13px;line-height:18px;color:#000;transform:scaleX(1.0);transform-origin:100% 0">8,000</div><div class="a" style="left:632px;width:298px;text-align:right;top:567.5px;font-size:13px;line-height:18px;color:#000;transform:scaleX(1.0);transform-origin:100% 0">0,000</div><div class="a" style="left:688px;width:298px;text-align:right;top:567.5px;font-size:13px;line-height:18px;color:#000;transform:scaleX(1.0);transform-origin:100% 0">0,000</div><div class="a" style="left:744px;width:298px;text-align:right;top:567.5px;font-size:13px;line-height:18px;color:#000;transform:scaleX(1.0);transform-origin:100% 0">0</div><div class="a" style="left:800px;width:298px;text-align:right;top:567.5px;font-size:13px;line-height:18px;color:#000;transform:scaleX(1.0);transform-origin:100% 0">0</div><div class="a" style="left:842px;width:298px;text-align:right;top:567.5px;font-size:13px;line-height:18px;color:#000;transform:scaleX(1.0);transform-origin:100% 0">1,450</div><div class="a" style="left:884px;width:298px;text-align:right;top:567.5px;font-size:13px;line-height:18px;color:#000;transform:scaleX(1.0);transform-origin:100% 0">0,000</div><div class="a" style="left:926px;width:298px;text-align:right;top:567.5px;font-size:13px;line-height:18px;color:#000;transform:scaleX(1.0);transform-origin:100% 0">0,000</div><div class="a" style="left:1229px;top:567.5px;font-size:13px;line-height:18px;color:#000;font-weight:normal;transform:scaleX(1.0);transform-origin:0 0">HC</div><div class="a" style="left:1285px;top:567.5px;font-size:13px;line-height:18px;color:#000;font-weight:normal;transform:scaleX(1.0);transform-origin:0 0">X</div><div class="a" style="left:1150px;width:298px;text-align:right;top:567.5px;font-size:13px;line-height:18px;color:#000;transform:scaleX(1.0);transform-origin:100% 0">9,450</div><svg class="a" style="left:23px;top:586px" width="7" height="7" viewBox="0 0 7 7"><path d="M0 0H6L0 6Z" fill="#008000"/></svg><div class="a" style="left:25px;top:587.5px;font-size:13px;line-height:18px;color:#000;font-weight:normal;">00129</div><div class="a" style="left:130px;top:587.5px;font-size:13px;line-height:18px;color:#000;font-weight:normal;transform:scaleX(1.06);transform-origin:0 0">Nguyễn văn Đến</div><div class="a" style="left:305px;top:587.5px;font-size:13px;line-height:18px;color:#000;font-weight:normal;transform:scaleX(1.07);transform-origin:0 0">Văn phòng</div><div class="a" style="left:410px;top:587.5px;font-size:13px;line-height:18px;color:#000;font-weight:normal;transform:scaleX(1.025);transform-origin:0 0">Chưa sắp xếp</div><div class="a" style="left:296px;width:298px;text-align:right;top:587.5px;font-size:13px;line-height:18px;color:#000;transform:scaleX(1.03);transform-origin:100% 0">15-10-2019</div><div class="a" style="left:599px;top:587.5px;font-size:13px;line-height:18px;color:#000;font-weight:normal;transform:scaleX(1.0);transform-origin:0 0">T.3</div><div class="a" style="left:655px;top:587.5px;font-size:13px;line-height:18px;color:#000;font-weight:normal;transform:scaleX(1.045);transform-origin:0 0">07:15</div><div class="a" style="left:711px;top:587.5px;font-size:13px;line-height:18px;color:#000;font-weight:normal;transform:scaleX(1.045);transform-origin:0 0">17:28</div><div class="a" style="left:520px;width:298px;text-align:right;top:587.5px;font-size:13px;line-height:18px;color:#000;transform:scaleX(1.0);transform-origin:100% 0">1,000</div><div class="a" style="left:576px;width:298px;text-align:right;top:587.5px;font-size:13px;line-height:18px;color:#000;transform:scaleX(1.0);transform-origin:100% 0">8,000</div><div class="a" style="left:632px;width:298px;text-align:right;top:587.5px;font-size:13px;line-height:18px;color:#000;transform:scaleX(1.0);transform-origin:100% 0">0,000</div><div class="a" style="left:688px;width:298px;text-align:right;top:587.5px;font-size:13px;line-height:18px;color:#000;transform:scaleX(1.0);transform-origin:100% 0">0,000</div><div class="a" style="left:744px;width:298px;text-align:right;top:587.5px;font-size:13px;line-height:18px;color:#000;transform:scaleX(1.0);transform-origin:100% 0">0</div><div class="a" style="left:800px;width:298px;text-align:right;top:587.5px;font-size:13px;line-height:18px;color:#000;transform:scaleX(1.0);transform-origin:100% 0">0</div><div class="a" style="left:842px;width:298px;text-align:right;top:587.5px;font-size:13px;line-height:18px;color:#000;transform:scaleX(1.0);transform-origin:100% 0">0,967</div><div class="a" style="left:884px;width:298px;text-align:right;top:587.5px;font-size:13px;line-height:18px;color:#000;transform:scaleX(1.0);transform-origin:100% 0">0,000</div><div class="a" style="left:926px;width:298px;text-align:right;top:587.5px;font-size:13px;line-height:18px;color:#000;transform:scaleX(1.0);transform-origin:100% 0">0,000</div><div class="a" style="left:1229px;top:587.5px;font-size:13px;line-height:18px;color:#000;font-weight:normal;transform:scaleX(1.0);transform-origin:0 0">HC</div><div class="a" style="left:1285px;top:587.5px;font-size:13px;line-height:18px;color:#000;font-weight:normal;transform:scaleX(1.0);transform-origin:0 0">X</div><div class="a" style="left:1150px;width:298px;text-align:right;top:587.5px;font-size:13px;line-height:18px;color:#000;transform:scaleX(1.0);transform-origin:100% 0">8,967</div><svg class="a" style="left:23px;top:606px" width="7" height="7" viewBox="0 0 7 7"><path d="M0 0H6L0 6Z" fill="#008000"/></svg><div class="a" style="left:25px;top:607.5px;font-size:13px;line-height:18px;color:#000;font-weight:normal;">00129</div><div class="a" style="left:130px;top:607.5px;font-size:13px;line-height:18px;color:#000;font-weight:normal;transform:scaleX(1.06);transform-origin:0 0">Nguyễn văn Đến</div><div class="a" style="left:305px;top:607.5px;font-size:13px;line-height:18px;color:#000;font-weight:normal;transform:scaleX(1.07);transform-origin:0 0">Văn phòng</div><div class="a" style="left:410px;top:607.5px;font-size:13px;line-height:18px;color:#000;font-weight:normal;transform:scaleX(1.025);transform-origin:0 0">Chưa sắp xếp</div><div class="a" style="left:296px;width:298px;text-align:right;top:607.5px;font-size:13px;line-height:18px;color:#000;transform:scaleX(1.03);transform-origin:100% 0">16-10-2019</div><div class="a" style="left:599px;top:607.5px;font-size:13px;line-height:18px;color:#000;font-weight:normal;transform:scaleX(1.0);transform-origin:0 0">T.4</div><div class="a" style="left:655px;top:607.5px;font-size:13px;line-height:18px;color:#000;font-weight:normal;transform:scaleX(1.045);transform-origin:0 0">07:13</div><div class="a" style="left:711px;top:607.5px;font-size:13px;line-height:18px;color:#000;font-weight:normal;transform:scaleX(1.045);transform-origin:0 0">17:02</div><div class="a" style="left:520px;width:298px;text-align:right;top:607.5px;font-size:13px;line-height:18px;color:#000;transform:scaleX(1.0);transform-origin:100% 0">1,000</div><div class="a" style="left:576px;width:298px;text-align:right;top:607.5px;font-size:13px;line-height:18px;color:#000;transform:scaleX(1.0);transform-origin:100% 0">8,000</div><div class="a" style="left:632px;width:298px;text-align:right;top:607.5px;font-size:13px;line-height:18px;color:#000;transform:scaleX(1.0);transform-origin:100% 0">0,000</div><div class="a" style="left:688px;width:298px;text-align:right;top:607.5px;font-size:13px;line-height:18px;color:#000;transform:scaleX(1.0);transform-origin:100% 0">0,000</div><div class="a" style="left:744px;width:298px;text-align:right;top:607.5px;font-size:13px;line-height:18px;color:#000;transform:scaleX(1.0);transform-origin:100% 0">0</div><div class="a" style="left:800px;width:298px;text-align:right;top:607.5px;font-size:13px;line-height:18px;color:#000;transform:scaleX(1.0);transform-origin:100% 0">0</div><div class="a" style="left:842px;width:298px;text-align:right;top:607.5px;font-size:13px;line-height:18px;color:#000;transform:scaleX(1.0);transform-origin:100% 0">0,533</div><div class="a" style="left:884px;width:298px;text-align:right;top:607.5px;font-size:13px;line-height:18px;color:#000;transform:scaleX(1.0);transform-origin:100% 0">0,000</div><div class="a" style="left:926px;width:298px;text-align:right;top:607.5px;font-size:13px;line-height:18px;color:#000;transform:scaleX(1.0);transform-origin:100% 0">0,000</div><div class="a" style="left:1229px;top:607.5px;font-size:13px;line-height:18px;color:#000;font-weight:normal;transform:scaleX(1.0);transform-origin:0 0">HC</div><div class="a" style="left:1285px;top:607.5px;font-size:13px;line-height:18px;color:#000;font-weight:normal;transform:scaleX(1.0);transform-origin:0 0">X</div><div class="a" style="left:1150px;width:298px;text-align:right;top:607.5px;font-size:13px;line-height:18px;color:#000;transform:scaleX(1.0);transform-origin:100% 0">8,533</div><svg class="a" style="left:23px;top:626px" width="7" height="7" viewBox="0 0 7 7"><path d="M0 0H6L0 6Z" fill="#008000"/></svg><div class="a" style="left:25px;top:627.5px;font-size:13px;line-height:18px;color:#000;font-weight:normal;">00129</div><div class="a" style="left:130px;top:627.5px;font-size:13px;line-height:18px;color:#000;font-weight:normal;transform:scaleX(1.06);transform-origin:0 0">Nguyễn văn Đến</div><div class="a" style="left:305px;top:627.5px;font-size:13px;line-height:18px;color:#000;font-weight:normal;transform:scaleX(1.07);transform-origin:0 0">Văn phòng</div><div class="a" style="left:410px;top:627.5px;font-size:13px;line-height:18px;color:#000;font-weight:normal;transform:scaleX(1.025);transform-origin:0 0">Chưa sắp xếp</div><div class="a" style="left:296px;width:298px;text-align:right;top:627.5px;font-size:13px;line-height:18px;color:#000;transform:scaleX(1.03);transform-origin:100% 0">17-10-2019</div><div class="a" style="left:599px;top:627.5px;font-size:13px;line-height:18px;color:#000;font-weight:normal;transform:scaleX(1.0);transform-origin:0 0">T.5</div><div class="a" style="left:655px;top:627.5px;font-size:13px;line-height:18px;color:#000;font-weight:normal;transform:scaleX(1.045);transform-origin:0 0">07:17</div><div class="a" style="left:520px;width:298px;text-align:right;top:627.5px;font-size:13px;line-height:18px;color:#000;transform:scaleX(1.0);transform-origin:100% 0">0,000</div><div class="a" style="left:576px;width:298px;text-align:right;top:627.5px;font-size:13px;line-height:18px;color:#000;transform:scaleX(1.0);transform-origin:100% 0">0,000</div><div class="a" style="left:632px;width:298px;text-align:right;top:627.5px;font-size:13px;line-height:18px;color:#000;transform:scaleX(1.0);transform-origin:100% 0">0,000</div><div class="a" style="left:688px;width:298px;text-align:right;top:627.5px;font-size:13px;line-height:18px;color:#000;transform:scaleX(1.0);transform-origin:100% 0">0,000</div><div class="a" style="left:744px;width:298px;text-align:right;top:627.5px;font-size:13px;line-height:18px;color:#000;transform:scaleX(1.0);transform-origin:100% 0">0</div><div class="a" style="left:800px;width:298px;text-align:right;top:627.5px;font-size:13px;line-height:18px;color:#000;transform:scaleX(1.0);transform-origin:100% 0">0</div><div class="a" style="left:842px;width:298px;text-align:right;top:627.5px;font-size:13px;line-height:18px;color:#000;transform:scaleX(1.0);transform-origin:100% 0">0,000</div><div class="a" style="left:884px;width:298px;text-align:right;top:627.5px;font-size:13px;line-height:18px;color:#000;transform:scaleX(1.0);transform-origin:100% 0">0,000</div><div class="a" style="left:926px;width:298px;text-align:right;top:627.5px;font-size:13px;line-height:18px;color:#000;transform:scaleX(1.0);transform-origin:100% 0">0,000</div><div class="a" style="left:1229px;top:627.5px;font-size:13px;line-height:18px;color:#000;font-weight:normal;transform:scaleX(1.0);transform-origin:0 0">HC</div><div class="a" style="left:1285px;top:627.5px;font-size:13px;line-height:18px;color:#000;font-weight:normal;transform:scaleX(1.0);transform-origin:0 0">KR</div><div class="a" style="left:1150px;width:298px;text-align:right;top:627.5px;font-size:13px;line-height:18px;color:#000;transform:scaleX(1.0);transform-origin:100% 0">0,000</div><svg class="a" style="left:23px;top:646px" width="7" height="7" viewBox="0 0 7 7"><path d="M0 0H6L0 6Z" fill="#008000"/></svg><div class="a" style="left:25px;top:647.5px;font-size:13px;line-height:18px;color:#000;font-weight:normal;">00129</div><div class="a" style="left:130px;top:647.5px;font-size:13px;line-height:18px;color:#000;font-weight:normal;transform:scaleX(1.06);transform-origin:0 0">Nguyễn văn Đến</div><div class="a" style="left:305px;top:647.5px;font-size:13px;line-height:18px;color:#000;font-weight:normal;transform:scaleX(1.07);transform-origin:0 0">Văn phòng</div><div class="a" style="left:410px;top:647.5px;font-size:13px;line-height:18px;color:#000;font-weight:normal;transform:scaleX(1.025);transform-origin:0 0">Chưa sắp xếp</div><div class="a" style="left:296px;width:298px;text-align:right;top:647.5px;font-size:13px;line-height:18px;color:#000;transform:scaleX(1.03);transform-origin:100% 0">18-10-2019</div><div class="a" style="left:599px;top:647.5px;font-size:13px;line-height:18px;color:#000;font-weight:normal;transform:scaleX(1.0);transform-origin:0 0">T.6</div><div class="a" style="left:655px;top:647.5px;font-size:13px;line-height:18px;color:#000;font-weight:normal;transform:scaleX(1.045);transform-origin:0 0">07:12</div><div class="a" style="left:711px;top:647.5px;font-size:13px;line-height:18px;color:#000;font-weight:normal;transform:scaleX(1.045);transform-origin:0 0">16:28</div><div class="a" style="left:520px;width:298px;text-align:right;top:647.5px;font-size:13px;line-height:18px;color:#000;transform:scaleX(1.0);transform-origin:100% 0">0,996</div><div class="a" style="left:576px;width:298px;text-align:right;top:647.5px;font-size:13px;line-height:18px;color:#000;transform:scaleX(1.0);transform-origin:100% 0">7,967</div><div class="a" style="left:632px;width:298px;text-align:right;top:647.5px;font-size:13px;line-height:18px;color:#000;transform:scaleX(1.0);transform-origin:100% 0">0,000</div><div class="a" style="left:688px;width:298px;text-align:right;top:647.5px;font-size:13px;line-height:18px;color:#000;transform:scaleX(1.0);transform-origin:100% 0">0,000</div><div class="a" style="left:744px;width:298px;text-align:right;top:647.5px;font-size:13px;line-height:18px;color:#000;transform:scaleX(1.0);transform-origin:100% 0">0</div><div class="a" style="left:800px;width:298px;text-align:right;top:647.5px;font-size:13px;line-height:18px;color:#000;transform:scaleX(1.0);transform-origin:100% 0">2</div><div class="a" style="left:842px;width:298px;text-align:right;top:647.5px;font-size:13px;line-height:18px;color:#000;transform:scaleX(1.0);transform-origin:100% 0">0,000</div><div class="a" style="left:884px;width:298px;text-align:right;top:647.5px;font-size:13px;line-height:18px;color:#000;transform:scaleX(1.0);transform-origin:100% 0">0,000</div><div class="a" style="left:926px;width:298px;text-align:right;top:647.5px;font-size:13px;line-height:18px;color:#000;transform:scaleX(1.0);transform-origin:100% 0">0,000</div><div class="a" style="left:1229px;top:647.5px;font-size:13px;line-height:18px;color:#000;font-weight:normal;transform:scaleX(1.0);transform-origin:0 0">HC</div><div class="a" style="left:1285px;top:647.5px;font-size:13px;line-height:18px;color:#000;font-weight:normal;transform:scaleX(1.0);transform-origin:0 0">X</div><div class="a" style="left:1150px;width:298px;text-align:right;top:647.5px;font-size:13px;line-height:18px;color:#000;transform:scaleX(1.0);transform-origin:100% 0">7,967</div><svg class="a" style="left:23px;top:666px" width="7" height="7" viewBox="0 0 7 7"><path d="M0 0H6L0 6Z" fill="#008000"/></svg><div class="a" style="left:25px;top:667.5px;font-size:13px;line-height:18px;color:#000;font-weight:normal;">00129</div><div class="a" style="left:130px;top:667.5px;font-size:13px;line-height:18px;color:#000;font-weight:normal;transform:scaleX(1.06);transform-origin:0 0">Nguyễn văn Đến</div><div class="a" style="left:305px;top:667.5px;font-size:13px;line-height:18px;color:#000;font-weight:normal;transform:scaleX(1.07);transform-origin:0 0">Văn phòng</div><div class="a" style="left:410px;top:667.5px;font-size:13px;line-height:18px;color:#000;font-weight:normal;transform:scaleX(1.025);transform-origin:0 0">Chưa sắp xếp</div><div class="a" style="left:296px;width:298px;text-align:right;top:667.5px;font-size:13px;line-height:18px;color:#000;transform:scaleX(1.03);transform-origin:100% 0">19-10-2019</div><div class="a" style="left:599px;top:667.5px;font-size:13px;line-height:18px;color:#000;font-weight:normal;transform:scaleX(1.0);transform-origin:0 0">T.7</div><div class="a" style="left:655px;top:667.5px;font-size:13px;line-height:18px;color:#000;font-weight:normal;transform:scaleX(1.045);transform-origin:0 0">07:14</div><div class="a" style="left:520px;width:298px;text-align:right;top:667.5px;font-size:13px;line-height:18px;color:#000;transform:scaleX(1.0);transform-origin:100% 0">0,000</div><div class="a" style="left:576px;width:298px;text-align:right;top:667.5px;font-size:13px;line-height:18px;color:#000;transform:scaleX(1.0);transform-origin:100% 0">0,000</div><div class="a" style="left:632px;width:298px;text-align:right;top:667.5px;font-size:13px;line-height:18px;color:#000;transform:scaleX(1.0);transform-origin:100% 0">0,000</div><div class="a" style="left:688px;width:298px;text-align:right;top:667.5px;font-size:13px;line-height:18px;color:#000;transform:scaleX(1.0);transform-origin:100% 0">0,000</div><div class="a" style="left:744px;width:298px;text-align:right;top:667.5px;font-size:13px;line-height:18px;color:#000;transform:scaleX(1.0);transform-origin:100% 0">0</div><div class="a" style="left:800px;width:298px;text-align:right;top:667.5px;font-size:13px;line-height:18px;color:#000;transform:scaleX(1.0);transform-origin:100% 0">0</div><div class="a" style="left:842px;width:298px;text-align:right;top:667.5px;font-size:13px;line-height:18px;color:#000;transform:scaleX(1.0);transform-origin:100% 0">0,000</div><div class="a" style="left:884px;width:298px;text-align:right;top:667.5px;font-size:13px;line-height:18px;color:#000;transform:scaleX(1.0);transform-origin:100% 0">0,000</div><div class="a" style="left:926px;width:298px;text-align:right;top:667.5px;font-size:13px;line-height:18px;color:#000;transform:scaleX(1.0);transform-origin:100% 0">0,000</div><div class="a" style="left:1229px;top:667.5px;font-size:13px;line-height:18px;color:#000;font-weight:normal;transform:scaleX(1.0);transform-origin:0 0">HC</div><div class="a" style="left:1285px;top:667.5px;font-size:13px;line-height:18px;color:#000;font-weight:normal;transform:scaleX(1.0);transform-origin:0 0">KR</div><div class="a" style="left:1150px;width:298px;text-align:right;top:667.5px;font-size:13px;line-height:18px;color:#000;transform:scaleX(1.0);transform-origin:100% 0">0,000</div><svg class="a" style="left:23px;top:686px" width="7" height="7" viewBox="0 0 7 7"><path d="M0 0H6L0 6Z" fill="#008000"/></svg><div class="a" style="left:25px;top:687.5px;font-size:13px;line-height:18px;color:#000;font-weight:normal;">00129</div><div class="a" style="left:130px;top:687.5px;font-size:13px;line-height:18px;color:#000;font-weight:normal;transform:scaleX(1.06);transform-origin:0 0">Nguyễn văn Đến</div><div class="a" style="left:305px;top:687.5px;font-size:13px;line-height:18px;color:#000;font-weight:normal;transform:scaleX(1.07);transform-origin:0 0">Văn phòng</div><div class="a" style="left:410px;top:687.5px;font-size:13px;line-height:18px;color:#000;font-weight:normal;transform:scaleX(1.025);transform-origin:0 0">Chưa sắp xếp</div><div class="a" style="left:296px;width:298px;text-align:right;top:687.5px;font-size:13px;line-height:18px;color:#000;transform:scaleX(1.03);transform-origin:100% 0">20-10-2019</div><div class="a" style="left:599px;top:687.5px;font-size:13px;line-height:18px;color:#000;font-weight:normal;transform:scaleX(1.0);transform-origin:0 0">CN</div><div class="a" style="left:520px;width:298px;text-align:right;top:687.5px;font-size:13px;line-height:18px;color:#000;transform:scaleX(1.0);transform-origin:100% 0">0,000</div><div class="a" style="left:576px;width:298px;text-align:right;top:687.5px;font-size:13px;line-height:18px;color:#000;transform:scaleX(1.0);transform-origin:100% 0">0,000</div><div class="a" style="left:632px;width:298px;text-align:right;top:687.5px;font-size:13px;line-height:18px;color:#000;transform:scaleX(1.0);transform-origin:100% 0">1,000</div><div class="a" style="left:688px;width:298px;text-align:right;top:687.5px;font-size:13px;line-height:18px;color:#000;transform:scaleX(1.0);transform-origin:100% 0">8,000</div><div class="a" style="left:744px;width:298px;text-align:right;top:687.5px;font-size:13px;line-height:18px;color:#000;transform:scaleX(1.0);transform-origin:100% 0">0</div><div class="a" style="left:800px;width:298px;text-align:right;top:687.5px;font-size:13px;line-height:18px;color:#000;transform:scaleX(1.0);transform-origin:100% 0">0</div><div class="a" style="left:842px;width:298px;text-align:right;top:687.5px;font-size:13px;line-height:18px;color:#000;transform:scaleX(1.0);transform-origin:100% 0">0,000</div><div class="a" style="left:884px;width:298px;text-align:right;top:687.5px;font-size:13px;line-height:18px;color:#000;transform:scaleX(1.0);transform-origin:100% 0">0,000</div><div class="a" style="left:926px;width:298px;text-align:right;top:687.5px;font-size:13px;line-height:18px;color:#000;transform:scaleX(1.0);transform-origin:100% 0">0,000</div><div class="a" style="left:1229px;top:687.5px;font-size:13px;line-height:18px;color:#000;font-weight:normal;transform:scaleX(1.0);transform-origin:0 0">--</div><div class="a" style="left:1285px;top:687.5px;font-size:13px;line-height:18px;color:#000;font-weight:normal;transform:scaleX(1.0);transform-origin:0 0">V</div><div class="a" style="left:1341px;top:687.5px;font-size:13px;line-height:18px;color:#000;font-weight:normal;transform:scaleX(1.0);transform-origin:0 0">V</div><div class="a" style="left:1150px;width:298px;text-align:right;top:687.5px;font-size:13px;line-height:18px;color:#000;transform:scaleX(1.0);transform-origin:100% 0">0,000</div><svg class="a" style="left:23px;top:706px" width="7" height="7" viewBox="0 0 7 7"><path d="M0 0H6L0 6Z" fill="#008000"/></svg><div class="a" style="left:25px;top:707.5px;font-size:13px;line-height:18px;color:#000;font-weight:normal;">00129</div><div class="a" style="left:130px;top:707.5px;font-size:13px;line-height:18px;color:#000;font-weight:normal;transform:scaleX(1.06);transform-origin:0 0">Nguyễn văn Đến</div><div class="a" style="left:305px;top:707.5px;font-size:13px;line-height:18px;color:#000;font-weight:normal;transform:scaleX(1.07);transform-origin:0 0">Văn phòng</div><div class="a" style="left:410px;top:707.5px;font-size:13px;line-height:18px;color:#000;font-weight:normal;transform:scaleX(1.025);transform-origin:0 0">Chưa sắp xếp</div><div class="a" style="left:296px;width:298px;text-align:right;top:707.5px;font-size:13px;line-height:18px;color:#000;transform:scaleX(1.03);transform-origin:100% 0">21-10-2019</div><div class="a" style="left:599px;top:707.5px;font-size:13px;line-height:18px;color:#000;font-weight:normal;transform:scaleX(1.0);transform-origin:0 0">T.2</div><div class="a" style="left:655px;top:707.5px;font-size:13px;line-height:18px;color:#000;font-weight:normal;transform:scaleX(1.045);transform-origin:0 0">07:10</div><div class="a" style="left:711px;top:707.5px;font-size:13px;line-height:18px;color:#000;font-weight:normal;transform:scaleX(1.045);transform-origin:0 0">20:33</div><div class="a" style="left:520px;width:298px;text-align:right;top:707.5px;font-size:13px;line-height:18px;color:#000;transform:scaleX(1.0);transform-origin:100% 0">1,000</div><div class="a" style="left:576px;width:298px;text-align:right;top:707.5px;font-size:13px;line-height:18px;color:#000;transform:scaleX(1.0);transform-origin:100% 0">8,000</div><div class="a" style="left:632px;width:298px;text-align:right;top:707.5px;font-size:13px;line-height:18px;color:#000;transform:scaleX(1.0);transform-origin:100% 0">0,000</div><div class="a" style="left:688px;width:298px;text-align:right;top:707.5px;font-size:13px;line-height:18px;color:#000;transform:scaleX(1.0);transform-origin:100% 0">0,000</div><div class="a" style="left:744px;width:298px;text-align:right;top:707.5px;font-size:13px;line-height:18px;color:#000;transform:scaleX(1.0);transform-origin:100% 0">0</div><div class="a" style="left:800px;width:298px;text-align:right;top:707.5px;font-size:13px;line-height:18px;color:#000;transform:scaleX(1.0);transform-origin:100% 0">0</div><div class="a" style="left:842px;width:298px;text-align:right;top:707.5px;font-size:13px;line-height:18px;color:#000;transform:scaleX(1.0);transform-origin:100% 0">2,500</div><div class="a" style="left:884px;width:298px;text-align:right;top:707.5px;font-size:13px;line-height:18px;color:#000;transform:scaleX(1.0);transform-origin:100% 0">2,000</div><div class="a" style="left:926px;width:298px;text-align:right;top:707.5px;font-size:13px;line-height:18px;color:#000;transform:scaleX(1.0);transform-origin:100% 0">0,000</div><div class="a" style="left:1229px;top:707.5px;font-size:13px;line-height:18px;color:#000;font-weight:normal;transform:scaleX(1.0);transform-origin:0 0">HC</div><div class="a" style="left:1285px;top:707.5px;font-size:13px;line-height:18px;color:#000;font-weight:normal;transform:scaleX(1.0);transform-origin:0 0">X</div><div class="a" style="left:1150px;width:298px;text-align:right;top:707.5px;font-size:13px;line-height:18px;color:#000;transform:scaleX(1.0);transform-origin:100% 0">12,500</div></body></html>
